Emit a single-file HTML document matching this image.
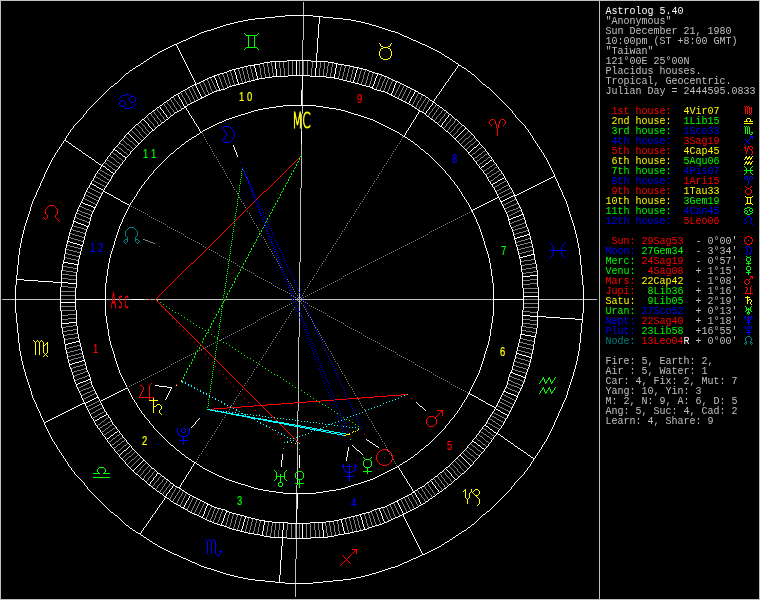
<!DOCTYPE html>
<html><head><meta charset="utf-8"><title>Astrolog 5.40</title>
<style>
html,body{margin:0;padding:0;background:#000}
#root{will-change:transform;position:relative;width:760px;height:600px;background:#000;overflow:hidden}
#root svg{position:absolute;left:0;top:0}
.ln{position:absolute;left:605.5px;height:10px;line-height:10px;font-family:"Liberation Mono",monospace;font-size:10px;white-space:pre;color:#c0c0c0}
.w{color:#fff}.g{color:#c0c0c0}.r{color:#f00}.y{color:#ff0}.n{color:#0f0}.b{color:#00f}.t{color:#008080}
.hn{font-family:"Liberation Sans",sans-serif;font-size:12.5px;text-anchor:middle}.lab{font-family:"DejaVu Sans Light","DejaVu Sans","Liberation Sans",sans-serif;text-anchor:middle}
</style></head><body>
<div id="root">
<svg width="760" height="600" viewBox="0 0 760 600">
<rect x="0" y="0" width="760" height="600" fill="#000"/>
<g fill="none" stroke-width="1" shape-rendering="crispEdges" transform="translate(0,0.5)">

<path stroke="#c0c0c0" d="M303 2h1M303 3h1M303 4h1M303 5h1M303 6h1M303 7h1M303 8h1M303 9h1M303 10h1M303 11h1M303 12h1M303 13h1M303 14h1M303 15h1M303 16h1M303 17h1M303 18h1M303 19h1M303 20h1M303 21h1M303 22h1M303 23h1M303 24h1M303 25h1M303 26h1M303 27h1M303 28h1M303 29h1M303 30h1M303 31h1M303 32h1M303 33h1M303 34h1M303 35h1M303 36h1M303 37h1M303 38h1M303 39h1M302 40h1M302 41h1M302 42h1M302 43h1M302 44h1M302 45h1M302 46h1M302 47h1M302 48h1M302 49h1M302 50h1M302 51h1M302 52h1M302 53h1M302 54h1M302 55h1M302 56h1M302 57h1M302 58h1M302 59h1M302 60h1M302 61h1M302 62h1M302 63h1M302 64h1M302 65h1M302 66h1M302 67h1M302 68h1M302 69h1M302 70h1M302 71h1M302 72h1M302 73h1M302 74h1M302 75h1M302 76h1M302 77h1M302 78h1M302 79h1M302 80h1M302 81h1M302 82h1M302 83h1M302 84h1M302 85h1M302 86h1M302 87h1M302 88h1M302 89h1M302 90h1M302 91h1M302 92h1M302 93h1M302 94h1M302 95h1M302 96h1M302 97h1M302 98h1M302 99h1M302 100h1M302 101h1M302 102h1M302 103h1M302 104h1M302 105h1M302 106h1M302 107h1M302 108h1M302 109h1M302 110h1M302 111h1M302 112h1M302 113h1M301 114h1M301 115h1M301 116h1M301 117h1M301 118h1M301 119h1M301 120h1M301 121h1M301 122h1M301 123h1M301 124h1M301 125h1M301 126h1M301 127h1M301 128h1M301 129h1M301 130h1M301 131h1M301 132h1M301 133h1M301 134h1M301 135h1M301 136h1M301 137h1M301 138h1M301 139h1M301 140h1M301 141h1M301 142h1M301 143h1M301 144h1M301 145h1M301 146h1M301 147h1M301 148h1M301 149h1M301 150h1M301 151h1M301 152h1M301 153h1M301 154h1M301 155h1M301 156h1M301 157h1M301 158h1M301 159h1M301 160h1M301 161h1M301 162h1M301 163h1M301 164h1M301 165h1M301 166h1M301 167h1M301 168h1M301 169h1M301 170h1M301 171h1M301 172h1M301 173h1M301 174h1M301 175h1M301 176h1M301 177h1M301 178h1M301 179h1M301 180h1M301 181h1M301 182h1M301 183h1M301 184h1M301 185h1M301 186h1M301 187h1M300 188h1M300 189h1M300 190h1M300 191h1M300 192h1M300 193h1M300 194h1M300 195h1M300 196h1M300 197h1M300 198h1M300 199h1M300 200h1M300 201h1M300 202h1M300 203h1M300 204h1M300 205h1M300 206h1M300 207h1M300 208h1M300 209h1M300 210h1M300 211h1M300 212h1M300 213h1M300 214h1M300 215h1M300 216h1M300 217h1M300 218h1M300 219h1M300 220h1M300 221h1M300 222h1M300 223h1M300 224h1M300 225h1M300 226h1M300 227h1M300 228h1M300 229h1M300 230h1M300 231h1M300 232h1M300 233h1M300 234h1M300 235h1M300 236h1M300 237h1M300 238h1M300 239h1M300 240h1M300 241h1M300 242h1M300 243h1M300 244h1M300 245h1M300 246h1M300 247h1M300 248h1M300 249h1M300 250h1M300 251h1M300 252h1M300 253h1M300 254h1M300 255h1M300 256h1M300 257h1M300 258h1M300 259h1M300 260h1M300 261h1M299 262h1M299 263h1M299 264h1M299 265h1M299 266h1M299 267h1M299 268h1M299 269h1M299 270h1M299 271h1M299 272h1M299 273h1M299 274h1M299 275h1M299 276h1M299 277h1M299 278h1M299 279h1M299 280h1M299 281h1M299 282h1M299 283h1M299 284h1M299 285h1M299 286h1M299 287h1M299 288h1M299 289h1M299 290h1M299 291h1M299 292h1M299 293h1M299 294h1M299 295h1M299 296h1M299 297h1M299 298h1M2 299h595M299 300h1M299 301h1M299 302h1M299 303h1M299 304h1M299 305h1M299 306h1M299 307h1M299 308h1M299 309h1M299 310h1M299 311h1M299 312h1M299 313h1M299 314h1M299 315h1M299 316h1M299 317h1M299 318h1M299 319h1M299 320h1M299 321h1M299 322h1M299 323h1M299 324h1M299 325h1M299 326h1M299 327h1M299 328h1M299 329h1M299 330h1M299 331h1M299 332h1M299 333h1M299 334h1M299 335h1M299 336h1M298 337h1M298 338h1M298 339h1M298 340h1M298 341h1M298 342h1M298 343h1M298 344h1M298 345h1M298 346h1M298 347h1M298 348h1M298 349h1M298 350h1M298 351h1M298 352h1M298 353h1M298 354h1M298 355h1M298 356h1M298 357h1M298 358h1M298 359h1M298 360h1M298 361h1M298 362h1M298 363h1M298 364h1M298 365h1M298 366h1M298 367h1M298 368h1M298 369h1M298 370h1M298 371h1M298 372h1M298 373h1M298 374h1M298 375h1M298 376h1M298 377h1M298 378h1M298 379h1M298 380h1M298 381h1M298 382h1M298 383h1M298 384h1M298 385h1M298 386h1M298 387h1M298 388h1M298 389h1M298 390h1M298 391h1M298 392h1M298 393h1M298 394h1M298 395h1M298 396h1M298 397h1M298 398h1M298 399h1M298 400h1M298 401h1M298 402h1M298 403h1M298 404h1M298 405h1M298 406h1M298 407h1M298 408h1M298 409h1M298 410h1M297 411h1M297 412h1M297 413h1M297 414h1M297 415h1M297 416h1M297 417h1M297 418h1M297 419h1M297 420h1M297 421h1M297 422h1M297 423h1M297 424h1M297 425h1M297 426h1M297 427h1M297 428h1M297 429h1M297 430h1M297 431h1M297 432h1M297 433h1M297 434h1M297 435h1M297 436h1M297 437h1M297 438h1M297 439h1M297 440h1M297 441h1M297 442h1M297 443h1M297 444h1M297 445h1M297 446h1M297 447h1M297 448h1M297 449h1M297 450h1M297 451h1M297 452h1M297 453h1M297 454h1M297 455h1M297 456h1M297 457h1M297 458h1M297 459h1M297 460h1M297 461h1M297 462h1M297 463h1M297 464h1M297 465h1M297 466h1M297 467h1M297 468h1M297 469h1M297 470h1M297 471h1M297 472h1M297 473h1M297 474h1M297 475h1M297 476h1M297 477h1M297 478h1M297 479h1M297 480h1M297 481h1M297 482h1M297 483h1M297 484h1M296 485h1M296 486h1M296 487h1M296 488h1M296 489h1M296 490h1M296 491h1M296 492h1M296 493h1M296 494h1M296 495h1M296 496h1M296 497h1M296 498h1M296 499h1M296 500h1M296 501h1M296 502h1M296 503h1M296 504h1M296 505h1M296 506h1M296 507h1M296 508h1M296 509h1M296 510h1M296 511h1M296 512h1M296 513h1M296 514h1M296 515h1M296 516h1M296 517h1M296 518h1M296 519h1M296 520h1M296 521h1M296 522h1M296 523h1M296 524h1M296 525h1M296 526h1M296 527h1M296 528h1M296 529h1M296 530h1M296 531h1M296 532h1M296 533h1M296 534h1M296 535h1M296 536h1M296 537h1M296 538h1M296 539h1M296 540h1M296 541h1M296 542h1M296 543h1M296 544h1M296 545h1M296 546h1M296 547h1M296 548h1M296 549h1M296 550h1M296 551h1M296 552h1M296 553h1M296 554h1M296 555h1M296 556h1M296 557h1M296 558h1M295 559h1M295 560h1M295 561h1M295 562h1M295 563h1M295 564h1M295 565h1M295 566h1M295 567h1M295 568h1M295 569h1M295 570h1M295 571h1M295 572h1M295 573h1M295 574h1M295 575h1M295 576h1M295 577h1M295 578h1M295 579h1M295 580h1M295 581h1M295 582h1M295 583h1M295 584h1M295 585h1M295 586h1M295 587h1M295 588h1M295 589h1M295 590h1M295 591h1M295 592h1M295 593h1M295 594h1M295 595h1M295 596h1"/>
<path stroke="#fff" d="M513 195h2M511 196h2M509 197h2M507 198h2M505 199h2M503 200h2M501 201h2"/>
<path stroke="#808080" d="M506 180h1M504 181h2M502 182h2M500 183h2M499 184h1M508 184h1M497 185h2M506 185h2M495 186h2M504 186h2M494 187h1M502 187h2M501 188h1M509 188h2M499 189h2M507 189h2M497 190h2M505 190h2M496 191h1M503 191h2M512 191h1M501 192h2M510 192h2M499 193h2M508 193h2M498 194h1M506 194h2M504 195h2M502 196h2M500 197h2M499 198h1"/>
<path stroke="#fff" d="M504 177h1M502 178h2M500 179h2M498 180h2M497 181h1M495 182h2M493 183h2M492 184h1"/>
<path stroke="#808080" d="M495 163h1M493 164h2M492 165h1M490 166h2M497 166h1M489 167h1M495 167h2M487 168h2M494 168h1M486 169h1M493 169h1M484 170h2M491 170h2M499 170h1M483 171h1M490 171h1M497 171h2M489 172h1M496 172h1M487 173h2M494 173h2M501 173h1M486 174h1M492 174h2M499 174h2M491 175h1M498 175h1M489 176h2M497 176h1M488 177h1M495 177h2M494 178h1M493 179h1M491 180h2M490 181h1"/>
<path stroke="#fff" d="M492 159h1M490 160h2M489 161h1M488 162h1M486 163h2M485 164h1M484 165h1M482 166h2M481 167h1"/>
<path stroke="#808080" d="M482 146h1M481 147h1M479 148h2M478 149h1M477 150h1M485 150h1M476 151h1M483 151h2M475 152h1M482 152h1M473 153h2M481 153h1M487 153h1M472 154h1M479 154h2M485 154h2M471 155h1M478 155h1M484 155h1M477 156h1M483 156h1M490 156h1M475 157h2M481 157h2M488 157h2M474 158h1M480 158h1M487 158h1M479 159h1M486 159h1M477 160h2M484 160h2M476 161h1M483 161h1M482 162h1M480 163h2M479 164h1"/>
<path stroke="#fff" d="M479 143h1M478 144h1M477 145h1M476 146h1M474 147h2M473 148h1M472 149h1M471 150h1M470 151h1M469 152h1"/>
<path stroke="#808080" d="M468 131h1M467 132h1M466 133h1M465 134h1M471 134h1M464 135h1M470 135h1M463 136h1M469 136h1M462 137h1M468 137h1M474 137h1M461 138h1M466 138h2M473 138h1M460 139h1M465 139h1M472 139h1M459 140h1M464 140h1M471 140h1M476 140h1M458 141h1M463 141h1M469 141h2M475 141h1M462 142h1M468 142h1M474 142h1M461 143h1M467 143h1M473 143h1M466 144h1M471 144h2M465 145h1M470 145h1M464 146h1M469 146h1M468 147h1M467 148h1M466 149h1"/>
<path stroke="#fff" d="M465 128h1M464 129h1M463 130h1M462 131h1M461 132h1M460 133h1M459 134h1M458 135h1M457 136h1M456 137h1M455 138h1"/>
<path stroke="#808080" d="M452 117h1M451 118h1M450 119h1M456 119h1M450 120h1M455 120h1M449 121h1M454 121h1M448 122h1M454 122h1M459 122h1M447 123h1M453 123h1M458 123h1M446 124h1M452 124h1M457 124h1M446 125h1M451 125h1M456 125h1M462 125h1M445 126h1M450 126h1M455 126h1M461 126h1M444 127h1M449 127h1M454 127h1M460 127h1M449 128h1M454 128h1M459 128h1M448 129h1M453 129h1M458 129h1M447 130h1M452 130h1M457 130h1M451 131h1M457 131h1M450 132h1M456 132h1M455 133h1M454 134h1M453 135h1"/>
<path stroke="#fff" d="M449 114h1M448 115h1M448 116h1M447 117h1M446 118h1M445 119h1M445 120h1M444 121h1M443 122h1M442 123h1M442 124h1M441 125h1"/>
<path stroke="#808080" d="M436 104h1M435 105h1M435 106h1M439 106h1M434 107h1M438 107h1M433 108h1M438 108h1M432 109h1M437 109h1M443 109h1M432 110h1M436 110h1M442 110h1M431 111h1M436 111h1M441 111h1M430 112h1M435 112h1M441 112h1M446 112h1M429 113h1M434 113h1M440 113h1M445 113h1M429 114h1M434 114h1M439 114h1M444 114h1M428 115h1M433 115h1M438 115h1M444 115h1M432 116h1M437 116h1M443 116h1M432 117h1M436 117h1M442 117h1M431 118h1M436 118h1M441 118h1M435 119h1M440 119h1M434 120h1M440 120h1M439 121h1M438 122h1"/>
<path stroke="#fff" d="M433 102h1M432 103h1M432 104h1M431 105h1M430 106h1M429 107h1M429 108h1M428 109h1M427 110h1M426 111h1M426 112h1M425 113h1"/>
<path stroke="#808080" d="M418 93h1M417 94h1M417 95h1M422 95h1M416 96h1M421 96h1M416 97h1M421 97h1M426 97h1M415 98h1M420 98h1M425 98h1M415 99h1M420 99h1M425 99h1M429 99h1M414 100h1M419 100h1M424 100h1M428 100h1M414 101h1M418 101h1M423 101h1M428 101h1M413 102h1M418 102h1M423 102h1M427 102h1M413 103h1M417 103h1M422 103h1M427 103h1M412 104h1M417 104h1M421 104h1M426 104h1M412 105h1M416 105h1M421 105h1M425 105h1M416 106h1M420 106h1M425 106h1M415 107h1M419 107h1M424 107h1M419 108h1M424 108h1M418 109h1M423 109h1M423 110h1M422 111h1"/>
<path stroke="#fff" d="M415 91h1M414 92h1M414 93h1M413 94h1M413 95h1M412 96h1M411 97h1M411 98h1M410 99h1M410 100h1M409 101h1M409 102h1M408 103h1"/>
<path stroke="#808080" d="M400 83h1M400 84h1M399 85h1M404 85h1M399 86h1M403 86h1M398 87h1M403 87h1M407 87h1M398 88h1M402 88h1M406 88h1M397 89h1M402 89h1M406 89h1M411 89h1M397 90h1M401 90h1M405 90h1M410 90h1M396 91h1M401 91h1M405 91h1M410 91h1M396 92h1M400 92h1M404 92h1M409 92h1M395 93h1M400 93h1M404 93h1M409 93h1M395 94h1M399 94h1M403 94h1M408 94h1M394 95h1M399 95h1M403 95h1M408 95h1M394 96h1M398 96h1M402 96h1M407 96h1M398 97h1M402 97h1M407 97h1M401 98h1M406 98h1M401 99h1M406 99h1M405 100h1M405 101h1"/>
<path stroke="#fff" d="M396 81h1M396 82h1M395 83h1M395 84h1M394 85h1M394 86h1M394 87h1M393 88h1M393 89h1M393 90h1M392 91h1M392 92h1M391 93h1M391 94h1"/>
<path stroke="#808080" d="M381 75h1M381 76h1M380 77h1M385 77h1M380 78h1M385 78h1M388 78h1M379 79h1M384 79h1M388 79h1M379 80h1M384 80h1M387 80h1M392 80h1M379 81h1M383 81h1M387 81h1M392 81h1M378 82h1M383 82h1M386 82h1M391 82h1M378 83h1M382 83h1M386 83h1M391 83h1M378 84h1M382 84h1M386 84h1M390 84h1M377 85h1M382 85h1M385 85h1M390 85h1M377 86h1M381 86h1M385 86h1M389 86h1M376 87h1M381 87h1M385 87h1M389 87h1M376 88h1M380 88h1M384 88h1M389 88h1M380 89h1M384 89h1M388 89h1M383 90h1M388 90h1M383 91h1M387 91h1M387 92h1"/>
<path stroke="#fff" d="M377 74h1M377 75h1M376 76h1M376 77h1M375 78h1M375 79h1M375 80h1M374 81h1M374 82h1M374 83h1M373 84h1M373 85h1M372 86h1M372 87h1"/>
<path stroke="#808080" d="M361 69h1M361 70h1M365 70h1M360 71h1M365 71h1M369 71h1M360 72h1M364 72h1M369 72h1M373 72h1M360 73h1M364 73h1M368 73h1M373 73h1M359 74h1M364 74h1M368 74h1M372 74h1M359 75h1M363 75h1M368 75h1M372 75h1M359 76h1M363 76h1M367 76h1M372 76h1M359 77h1M363 77h1M367 77h1M371 77h1M358 78h1M363 78h1M367 78h1M371 78h1M358 79h1M362 79h1M367 79h1M371 79h1M358 80h1M362 80h1M366 80h1M371 80h1M357 81h1M362 81h1M366 81h1M370 81h1M357 82h1M361 82h1M366 82h1M370 82h1M361 83h1M365 83h1M370 83h1M365 84h1M369 84h1M369 85h1"/>
<path stroke="#fff" d="M357 68h1M357 69h1M356 70h1M356 71h1M356 72h1M355 73h1M355 74h1M355 75h1M355 76h1M354 77h1M354 78h1M354 79h1M353 80h1M353 81h1"/>
<path stroke="#808080" d="M341 64h1M341 65h1M345 65h1M341 66h1M345 66h1M349 66h1M340 67h1M345 67h1M349 67h1M353 67h1M340 68h1M344 68h1M349 68h1M353 68h1M340 69h1M344 69h1M348 69h1M353 69h1M340 70h1M344 70h1M348 70h1M352 70h1M339 71h1M344 71h1M348 71h1M352 71h1M339 72h1M343 72h1M348 72h1M352 72h1M339 73h1M343 73h1M347 73h1M352 73h1M339 74h1M343 74h1M347 74h1M351 74h1M339 75h1M343 75h1M347 75h1M351 75h1M338 76h1M342 76h1M347 76h1M351 76h1M338 77h1M342 77h1M346 77h1M351 77h1M338 78h1M342 78h1M346 78h1M350 78h1M346 79h1M350 79h1M350 80h1"/>
<path stroke="#fff" d="M336 64h1M336 65h1M336 66h1M336 67h1M335 68h1M335 69h1M335 70h1M335 71h1M335 72h1M335 73h1M334 74h1M334 75h1M334 76h1M334 77h1"/>
<path stroke="#808080" d="M320 61h1M320 62h1M324 62h1M328 62h1M320 63h1M324 63h1M328 63h1M332 63h1M320 64h1M324 64h1M328 64h1M332 64h1M320 65h1M324 65h1M328 65h1M332 65h1M320 66h1M324 66h1M327 66h1M332 66h1M320 67h1M324 67h1M327 67h1M331 67h1M319 68h1M324 68h1M327 68h1M331 68h1M319 69h1M323 69h1M327 69h1M331 69h1M319 70h1M323 70h1M327 70h1M331 70h1M319 71h1M323 71h1M327 71h1M331 71h1M319 72h1M323 72h1M327 72h1M331 72h1M319 73h1M323 73h1M326 73h1M330 73h1M319 74h1M323 74h1M326 74h1M330 74h1M319 75h1M323 75h1M326 75h1M330 75h1M326 76h1M330 76h1"/>
<path stroke="#fff" d="M316 61h1M316 62h1M316 63h1M316 64h1M316 65h1M316 66h1M316 67h1M315 68h1M315 69h1M315 70h1M315 71h1M315 72h1M315 73h1M315 74h1M315 75h1"/>
<path stroke="#808080" d="M299 61h1M303 61h1M307 61h1M312 61h1M299 62h1M303 62h1M307 62h1M312 62h1M299 63h1M303 63h1M307 63h1M312 63h1M299 64h1M303 64h1M307 64h1M312 64h1M299 65h1M303 65h1M307 65h1M312 65h1M299 66h1M303 66h1M307 66h1M312 66h1M299 67h1M303 67h1M307 67h1M312 67h1M299 68h1M303 68h1M307 68h1M311 68h1M299 69h1M303 69h1M307 69h1M311 69h1M299 70h1M303 70h1M307 70h1M311 70h1M299 71h1M303 71h1M307 71h1M311 71h1M299 72h1M303 72h1M307 72h1M311 72h1M299 73h1M303 73h1M307 73h1M311 73h1M299 74h1M303 74h1M307 74h1M311 74h1M311 75h1"/>
<path stroke="#fff" d="M296 61h1M296 62h1M296 63h1M296 64h1M296 65h1M296 66h1M296 67h1M296 68h1M296 69h1M296 70h1M296 71h1M296 72h1M296 73h1M296 74h1"/>
<path stroke="#808080" d="M279 61h1M283 61h1M288 61h1M292 61h1M279 62h1M283 62h1M288 62h1M292 62h1M279 63h1M283 63h1M288 63h1M292 63h1M279 64h1M283 64h1M288 64h1M292 64h1M279 65h1M283 65h1M288 65h1M292 65h1M279 66h1M283 66h1M288 66h1M292 66h1M279 67h1M283 67h1M288 67h1M292 67h1M280 68h1M284 68h1M288 68h1M292 68h1M280 69h1M284 69h1M288 69h1M292 69h1M280 70h1M284 70h1M288 70h1M292 70h1M280 71h1M284 71h1M288 71h1M292 71h1M280 72h1M284 72h1M288 72h1M292 72h1M280 73h1M284 73h1M288 73h1M292 73h1M280 74h1M284 74h1M288 74h1M292 74h1M280 75h1M284 75h1"/>
<path stroke="#fff" d="M275 62h1M275 63h1M275 64h1M275 65h1M275 66h1M275 67h1M275 68h1M276 69h1M276 70h1M276 71h1M276 72h1M276 73h1M276 74h1M276 75h1"/>
<path stroke="#808080" d="M271 62h1M263 63h1M267 63h1M271 63h1M259 64h1M263 64h1M267 64h1M271 64h1M259 65h1M263 65h1M267 65h1M271 65h1M259 66h1M263 66h1M267 66h1M272 66h1M259 67h1M264 67h1M268 67h1M272 67h1M260 68h1M264 68h1M268 68h1M272 68h1M260 69h1M264 69h1M268 69h1M272 69h1M260 70h1M264 70h1M268 70h1M272 70h1M260 71h1M264 71h1M268 71h1M272 71h1M260 72h1M264 72h1M268 72h1M272 72h1M260 73h1M264 73h1M269 73h1M273 73h1M260 74h1M265 74h1M269 74h1M273 74h1M261 75h1M265 75h1M269 75h1M273 75h1M261 76h1M265 76h1M269 76h1M273 76h1M261 77h1M265 77h1M261 78h1"/>
<path stroke="#fff" d="M254 65h1M254 66h1M254 67h1M255 68h1M255 69h1M255 70h1M255 71h1M256 72h1M256 73h1M256 74h1M256 75h1M257 76h1M257 77h1M257 78h1"/>
<path stroke="#808080" d="M250 66h1M246 67h1M250 67h1M242 68h1M246 68h1M250 68h1M238 69h1M242 69h1M246 69h1M251 69h1M238 70h1M242 70h1M247 70h1M251 70h1M239 71h1M243 71h1M247 71h1M251 71h1M239 72h1M243 72h1M247 72h1M251 72h1M239 73h1M243 73h1M247 73h1M252 73h1M240 74h1M243 74h1M248 74h1M252 74h1M240 75h1M244 75h1M248 75h1M252 75h1M240 76h1M244 76h1M248 76h1M252 76h1M240 77h1M244 77h1M248 77h1M253 77h1M241 78h1M244 78h1M249 78h1M253 78h1M241 79h1M245 79h1M249 79h1M253 79h1M241 80h1M245 80h1M249 80h1M242 81h1M245 81h1M242 82h1"/>
<path stroke="#fff" d="M234 70h1M234 71h1M235 72h1M235 73h1M235 74h1M236 75h1M236 76h1M236 77h1M236 78h1M237 79h1M237 80h1M237 81h1M238 82h1M238 83h1"/>
<path stroke="#808080" d="M230 71h1M226 72h1M230 72h1M222 73h1M226 73h1M231 73h1M222 74h1M227 74h1M231 74h1M218 75h1M223 75h1M227 75h1M231 75h1M218 76h1M223 76h1M227 76h1M232 76h1M219 77h1M224 77h1M228 77h1M232 77h1M219 78h1M224 78h1M228 78h1M232 78h1M220 79h1M224 79h1M228 79h1M232 79h1M220 80h1M225 80h1M228 80h1M233 80h1M220 81h1M225 81h1M229 81h1M233 81h1M221 82h1M225 82h1M229 82h1M233 82h1M221 83h1M226 83h1M229 83h1M234 83h1M221 84h1M226 84h1M230 84h1M234 84h1M222 85h1M227 85h1M230 85h1M222 86h1M227 86h1M223 87h1M223 88h1"/>
<path stroke="#fff" d="M214 76h1M214 77h1M215 78h1M215 79h1M216 80h1M216 81h1M216 82h1M217 83h1M217 84h1M217 85h1M218 86h1M218 87h1M219 88h1M219 89h1"/>
<path stroke="#808080" d="M210 78h1M207 79h1M211 79h1M207 80h1M211 80h1M203 81h1M208 81h1M212 81h1M203 82h1M208 82h1M212 82h1M199 83h1M204 83h1M209 83h1M213 83h1M200 84h1M204 84h1M209 84h1M213 84h1M200 85h1M205 85h1M209 85h1M214 85h1M201 86h1M205 86h1M210 86h1M214 86h1M201 87h1M206 87h1M210 87h1M215 87h1M202 88h1M206 88h1M210 88h1M215 88h1M202 89h1M206 89h1M211 89h1M216 89h1M203 90h1M207 90h1M211 90h1M216 90h1M203 91h1M207 91h1M212 91h1M204 92h1M208 92h1M212 92h1M204 93h1M208 93h1M205 94h1M205 95h1"/>
<path stroke="#fff" d="M195 84h1M195 85h1M196 86h1M196 87h1M197 88h1M197 89h1M198 90h1M198 91h1M199 92h1M199 93h1M200 94h1M200 95h1M201 96h1M201 97h1"/>
<path stroke="#808080" d="M191 86h1M192 87h1M188 88h1M192 88h1M189 89h1M193 89h1M184 90h1M189 90h1M193 90h1M185 91h1M190 91h1M194 91h1M180 92h1M185 92h1M190 92h1M194 92h1M181 93h1M186 93h1M191 93h1M195 93h1M181 94h1M186 94h1M191 94h1M195 94h1M182 95h1M187 95h1M192 95h1M196 95h1M182 96h1M188 96h1M192 96h1M196 96h1M183 97h1M188 97h1M193 97h1M197 97h1M184 98h1M189 98h1M193 98h1M197 98h1M184 99h1M189 99h1M194 99h1M198 99h1M185 100h1M190 100h1M194 100h1M185 101h1M190 101h1M186 102h1M191 102h1M186 103h1M187 104h1"/>
<path stroke="#fff" d="M177 94h1M178 95h1M178 96h1M179 97h1M179 98h1M180 99h1M181 100h1M181 101h1M182 102h1M182 103h1M183 104h1M183 105h1M184 106h1"/>
<path stroke="#808080" d="M173 97h1M174 98h1M170 99h1M174 99h1M171 100h1M175 100h1M166 101h1M171 101h1M176 101h1M167 102h1M172 102h1M177 102h1M163 103h1M167 103h1M173 103h1M177 103h1M164 104h1M168 104h1M173 104h1M178 104h1M164 105h1M169 105h1M174 105h1M179 105h1M165 106h1M170 106h1M174 106h1M180 106h1M166 107h1M170 107h1M175 107h1M180 107h1M166 108h1M171 108h1M176 108h1M181 108h1M167 109h1M172 109h1M176 109h1M168 110h1M173 110h1M177 110h1M168 111h1M173 111h1M169 112h1M174 112h1M170 113h1M170 114h1M171 115h1"/>
<path stroke="#fff" d="M159 106h1M160 107h1M160 108h1M161 109h1M162 110h1M163 111h1M163 112h1M164 113h1M165 114h1M166 115h1M166 116h1M167 117h1"/>
<path stroke="#808080" d="M156 108h1M157 109h1M157 110h1M153 111h1M158 111h1M154 112h1M159 112h1M150 113h1M154 113h1M160 113h1M151 114h1M155 114h1M160 114h1M151 115h1M156 115h1M161 115h1M146 116h1M152 116h1M157 116h1M162 116h1M147 117h1M153 117h1M157 117h1M163 117h1M148 118h1M154 118h1M158 118h1M163 118h1M148 119h1M154 119h1M159 119h1M164 119h1M149 120h1M155 120h1M160 120h1M150 121h1M156 121h1M160 121h1M151 122h1M157 122h1M161 122h1M152 123h1M157 123h1M153 124h1M158 124h1M153 125h1M154 126h1M155 127h1"/>
<path stroke="#fff" d="M143 119h1M144 120h1M145 121h1M146 122h1M147 123h1M148 124h1M148 125h1M149 126h1M150 127h1M151 128h1M152 129h1"/>
<path stroke="#808080" d="M140 122h1M141 123h1M137 124h1M142 124h1M138 125h1M143 125h1M139 126h1M144 126h1M134 127h1M140 127h1M145 127h1M135 128h1M141 128h1M145 128h1M136 129h1M142 129h1M146 129h1M131 130h1M137 130h1M142 130h1M147 130h1M132 131h1M138 131h1M143 131h1M148 131h1M133 132h1M139 132h1M144 132h1M149 132h1M134 133h1M139 133h1M145 133h1M135 134h1M140 134h1M146 134h1M136 135h1M141 135h1M137 136h1M142 136h1M138 137h1M143 137h1M139 138h1M140 139h1M141 140h1"/>
<path stroke="#fff" d="M128 133h1M129 134h1M130 135h1M131 136h1M132 137h1M133 138h1M134 139h1M135 140h1M136 141h1M137 142h1M138 143h1"/>
<path stroke="#808080" d="M125 136h1M126 137h1M127 138h1M122 139h1M128 139h1M123 140h1M129 140h1M124 141h1M130 141h2M119 142h1M125 142h1M132 142h1M120 143h1M126 143h1M133 143h1M121 144h2M127 144h2M134 144h1M123 145h1M129 145h1M135 145h1M117 146h1M124 146h1M130 146h1M118 147h1M125 147h1M131 147h1M119 148h2M126 148h1M132 148h1M121 149h1M127 149h2M122 150h1M129 150h1M123 151h1M130 151h1M124 152h2M126 153h1M127 154h1"/>
<path stroke="#fff" d="M114 149h1M115 150h2M117 151h1M118 152h1M119 153h2M121 154h1M122 155h1M123 156h2M125 157h1"/>
<path stroke="#808080" d="M112 152h1M113 153h1M114 154h2M109 155h1M116 155h1M110 156h1M117 156h1M111 157h2M118 157h1M113 158h1M119 158h2M106 159h1M114 159h1M121 159h1M107 160h2M115 160h1M122 160h1M109 161h1M116 161h1M104 162h1M110 162h2M117 162h2M105 163h2M112 163h1M119 163h1M107 164h1M113 164h2M120 164h1M108 165h1M115 165h1M109 166h2M116 166h2M111 167h1M118 167h1M112 168h1M113 169h2M115 170h1"/>
<path stroke="#fff" d="M102 165h1M103 166h2M105 167h1M106 168h1M107 169h2M109 170h1M110 171h1M111 172h2M113 173h1"/>
<path stroke="#808080" d="M99 169h1M100 170h2M102 171h2M97 172h1M104 172h1M98 173h2M105 173h2M100 174h1M107 174h2M101 175h2M109 175h2M95 176h1M103 176h1M111 176h1M96 177h2M104 177h2M98 178h2M106 178h1M100 179h1M107 179h2M93 180h1M101 180h2M109 180h1M94 181h2M103 181h2M96 182h2M105 182h2M98 183h2M107 183h1M100 184h2M102 185h2M104 186h2"/>
<path stroke="#fff" d="M91 183h1M92 184h2M94 185h2M96 186h1M97 187h2M99 188h2M101 189h2M103 190h1"/>
<path stroke="#808080" d="M89 187h1M90 188h2M92 189h2M94 190h2M87 191h1M96 191h2M88 192h2M98 192h2M90 193h2M100 193h2M85 194h1M92 194h2M86 195h2M94 195h2M88 196h2M96 196h2M90 197h2M98 197h2M83 198h2M92 198h2M85 199h2M94 199h2M87 200h2M96 200h2M89 201h2M91 202h2M93 203h2M95 204h2"/>
<path stroke="#fff" d="M81 202h2M83 203h2M85 204h3M88 205h3M91 206h2M93 207h2"/>
<path stroke="#808080" d="M80 206h2M82 207h2M84 208h2M86 209h3M78 210h2M89 210h2M80 211h2M91 211h2M82 212h3M77 213h2M85 213h3M79 214h2M88 214h2M81 215h2M90 215h2M83 216h3M75 217h2M86 217h2M77 218h2M88 218h2M79 219h3M82 220h3M85 221h2M87 222h2"/>
<path stroke="#fff" d="M74 221h2M76 222h2M78 223h3M81 224h3M84 225h2M86 226h2"/>
<path stroke="#808080" d="M72 225h2M74 226h3M77 227h4M81 228h3M71 229h2M84 229h2M73 230h3M76 231h4M80 232h3M70 233h2M83 233h2M72 234h3M75 235h4M79 236h3M69 237h2M82 237h2M71 238h3M74 239h4M78 240h3M81 241h2"/>
<path stroke="#fff" d="M68 241h2M70 242h3M73 243h4M77 244h3M80 245h2"/>
<path stroke="#808080" d="M67 245h3M70 246h4M74 247h4M78 248h3M66 249h3M69 250h4M73 251h4M77 252h3M65 253h3M68 254h4M72 255h4M76 256h3M64 257h3M67 258h4M71 259h5M76 260h3"/>
<path stroke="#fff" d="M64 262h4M68 263h6M74 264h4"/>
<path stroke="#808080" d="M63 266h4M67 267h6M73 268h4M62 270h4M66 271h7M73 272h4M62 274h7M69 275h7M61 278h7M68 279h8"/>
<path stroke="#fff" d="M61 282h7M68 283h8"/>
<path stroke="#808080" d="M61 286h7M68 287h8M61 291h14M61 295h14M61 299h14"/>
<path stroke="#fff" d="M61 302h14"/>
<path stroke="#808080" d="M61 306h14M61 310h14M68 314h8M61 315h7M68 318h8M61 319h7"/>
<path stroke="#fff" d="M69 322h7M62 323h7"/>
<path stroke="#808080" d="M73 325h4M66 326h7M62 327h4M73 329h4M67 330h6M63 331h4M74 333h4M67 334h7M63 335h4M75 337h4M68 338h7M64 339h4"/>
<path stroke="#fff" d="M76 341h3M72 342h4M68 343h4M65 344h3"/>
<path stroke="#808080" d="M77 345h3M73 346h4M69 347h4M66 348h3M78 349h3M74 350h4M70 351h4M67 352h3M79 353h3M75 354h4M71 355h4M68 356h3M81 356h2M78 357h3M74 358h4M71 359h3M69 360h2"/>
<path stroke="#fff" d="M82 360h2M79 361h3M75 362h4M72 363h3M70 364h2"/>
<path stroke="#808080" d="M83 364h2M80 365h3M76 366h4M73 367h3M71 368h2M84 368h2M81 369h3M77 370h4M74 371h3M85 371h2M72 372h2M83 372h2M80 373h3M77 374h3M75 375h2M87 375h2M73 376h2M85 376h2M82 377h3M79 378h3M77 379h2M75 380h2"/>
<path stroke="#fff" d="M88 379h2M86 380h2M83 381h3M80 382h3M78 383h2M76 384h2"/>
<path stroke="#808080" d="M89 382h2M87 383h2M85 384h2M83 385h2M81 386h2M91 386h2M79 387h2M89 387h2M78 388h1M86 388h3M83 389h3M81 390h2M92 390h2M79 391h2M90 391h2M87 392h3M85 393h2M94 393h2M83 394h2M92 394h2M81 395h2M90 395h2M88 396h2M86 397h2M84 398h2M83 399h1"/>
<path stroke="#fff" d="M96 397h2M94 398h2M92 399h2M90 400h2M88 401h2M86 402h2M84 403h2"/>
<path stroke="#808080" d="M99 400h1M97 401h2M95 402h2M93 403h2M91 404h2M99 404h2M89 405h2M97 405h2M87 406h2M95 406h2M86 407h1M93 407h2M102 407h1M91 408h2M100 408h2M89 409h2M98 409h2M88 410h1M96 410h2M95 411h1M104 411h1M93 412h2M102 412h2M91 413h2M100 413h2M90 414h1M98 414h2M97 415h1M95 416h2M93 417h2M92 418h1"/>
<path stroke="#fff" d="M106 414h1M104 415h2M102 416h2M100 417h2M99 418h1M97 419h2M95 420h2M94 421h1"/>
<path stroke="#808080" d="M108 417h1M106 418h2M105 419h1M104 420h1M102 421h2M110 421h1M101 422h1M108 422h2M100 423h1M107 423h1M98 424h2M105 424h2M112 424h1M97 425h1M103 425h2M110 425h2M102 426h1M109 426h1M100 427h2M108 427h1M115 427h1M99 428h1M106 428h2M113 428h2M105 429h1M112 429h1M104 430h1M110 430h2M102 431h2M109 431h1M101 432h1M107 432h2M106 433h1M104 434h2M103 435h1"/>
<path stroke="#fff" d="M117 431h1M115 432h2M114 433h1M113 434h1M111 435h2M110 436h1M109 437h1M107 438h2M106 439h1"/>
<path stroke="#808080" d="M119 434h1M117 435h2M116 436h1M115 437h1M122 437h1M113 438h2M120 438h2M112 439h1M119 439h1M111 440h1M118 440h1M124 440h1M109 441h2M116 441h2M122 441h2M108 442h1M115 442h1M121 442h1M114 443h1M120 443h1M127 443h1M112 444h2M118 444h2M126 444h1M111 445h1M117 445h1M124 445h2M116 446h1M123 446h1M114 447h2M122 447h1M113 448h1M121 448h1M120 449h1M118 450h2M117 451h1M116 452h1"/>
<path stroke="#fff" d="M129 446h1M128 447h1M127 448h1M126 449h1M124 450h2M123 451h1M122 452h1M121 453h1M120 454h1M119 455h1"/>
<path stroke="#808080" d="M132 449h1M131 450h1M130 451h1M129 452h1M134 452h1M127 453h2M133 453h1M126 454h1M132 454h1M125 455h1M131 455h1M137 455h1M124 456h1M129 456h2M136 456h1M123 457h1M128 457h1M135 457h1M140 457h1M122 458h1M127 458h1M134 458h1M139 458h1M126 459h1M132 459h2M138 459h1M125 460h1M131 460h1M137 460h1M124 461h1M130 461h1M136 461h1M129 462h1M135 462h1M128 463h1M134 463h1M127 464h1M133 464h1M132 465h1M131 466h1M130 467h1"/>
<path stroke="#fff" d="M143 460h1M142 461h1M141 462h1M140 463h1M139 464h1M138 465h1M137 466h1M136 467h1M135 468h1M134 469h1M133 470h1"/>
<path stroke="#808080" d="M145 463h1M144 464h1M143 465h1M142 466h1M148 466h1M141 467h1M147 467h1M140 468h1M146 468h1M151 468h1M140 469h1M145 469h1M150 469h1M139 470h1M144 470h1M149 470h1M138 471h1M143 471h1M149 471h1M154 471h1M137 472h1M143 472h1M148 472h1M153 472h1M136 473h1M142 473h1M147 473h1M152 473h1M141 474h1M146 474h1M152 474h1M140 475h1M145 475h1M151 475h1M139 476h1M144 476h1M150 476h1M144 477h1M149 477h1M143 478h1M148 478h1M142 479h1M148 479h1M147 480h1M146 481h1"/>
<path stroke="#fff" d="M157 473h1M156 474h1M156 475h1M155 476h1M154 477h1M153 478h1M153 479h1M152 480h1M151 481h1M150 482h1M150 483h1M149 484h1"/>
<path stroke="#808080" d="M160 476h1M159 477h1M158 478h1M164 478h1M158 479h1M163 479h1M157 480h1M162 480h1M167 480h1M156 481h1M162 481h1M166 481h1M155 482h1M161 482h1M166 482h1M154 483h1M160 483h1M165 483h1M170 483h1M154 484h1M159 484h1M164 484h1M169 484h1M153 485h1M158 485h1M164 485h1M169 485h1M152 486h1M157 486h1M163 486h1M168 486h1M157 487h1M162 487h1M167 487h1M156 488h1M162 488h1M166 488h1M155 489h1M161 489h1M166 489h1M160 490h1M165 490h1M160 491h1M164 491h1M159 492h1M163 492h1M163 493h1M162 494h1"/>
<path stroke="#fff" d="M173 485h1M172 486h1M172 487h1M171 488h1M170 489h1M169 490h1M169 491h1M168 492h1M167 493h1M166 494h1M166 495h1M165 496h1"/>
<path stroke="#808080" d="M176 487h1M175 488h1M175 489h1M180 489h1M174 490h1M179 490h1M174 491h1M179 491h1M183 491h1M173 492h1M178 492h1M182 492h1M172 493h1M177 493h1M182 493h1M186 493h1M172 494h1M177 494h1M181 494h1M185 494h1M171 495h1M176 495h1M181 495h1M185 495h1M171 496h1M175 496h1M180 496h1M184 496h1M170 497h1M175 497h1M179 497h1M184 497h1M170 498h1M174 498h1M179 498h1M183 498h1M169 499h1M173 499h1M178 499h1M183 499h1M173 500h1M178 500h1M182 500h1M172 501h1M177 501h1M182 501h1M177 502h1M181 502h1M176 503h1M181 503h1M180 504h1M180 505h1"/>
<path stroke="#fff" d="M190 495h1M189 496h1M189 497h1M188 498h1M188 499h1M187 500h1M186 501h1M186 502h1M185 503h1M185 504h1M184 505h1M184 506h1M183 507h1"/>
<path stroke="#808080" d="M193 497h1M192 498h1M192 499h1M197 499h1M191 500h1M196 500h1M191 501h1M196 501h1M200 501h1M190 502h1M195 502h1M199 502h1M204 502h1M190 503h1M195 503h1M199 503h1M204 503h1M189 504h1M194 504h1M198 504h1M203 504h1M189 505h1M194 505h1M198 505h1M203 505h1M188 506h1M193 506h1M197 506h1M202 506h1M188 507h1M193 507h1M197 507h1M202 507h1M187 508h1M192 508h1M196 508h1M201 508h1M187 509h1M192 509h1M196 509h1M201 509h1M191 510h1M195 510h1M200 510h1M191 511h1M195 511h1M200 511h1M194 512h1M199 512h1M194 513h1M199 513h1M198 514h1M198 515h1"/>
<path stroke="#fff" d="M207 504h1M207 505h1M206 506h1M206 507h1M205 508h1M205 509h1M205 510h1M204 511h1M204 512h1M204 513h1M203 514h1M203 515h1M202 516h1M202 517h1"/>
<path stroke="#808080" d="M211 506h1M211 507h1M215 507h1M210 508h1M215 508h1M210 509h1M214 509h1M218 509h1M209 510h1M214 510h1M218 510h1M222 510h1M209 511h1M213 511h1M217 511h1M222 511h1M208 512h1M213 512h1M217 512h1M221 512h1M208 513h1M213 513h1M216 513h1M221 513h1M208 514h1M212 514h1M216 514h1M220 514h1M207 515h1M212 515h1M215 515h1M220 515h1M207 516h1M212 516h1M215 516h1M220 516h1M206 517h1M211 517h1M215 517h1M219 517h1M206 518h1M211 518h1M214 518h1M219 518h1M210 519h1M214 519h1M219 519h1M210 520h1M213 520h1M218 520h1M213 521h1M218 521h1M217 522h1M217 523h1"/>
<path stroke="#fff" d="M226 511h1M226 512h1M225 513h1M225 514h1M224 515h1M224 516h1M224 517h1M223 518h1M223 519h1M223 520h1M222 521h1M222 522h1M221 523h1M221 524h1"/>
<path stroke="#808080" d="M229 513h1M229 514h1M233 514h1M228 515h1M233 515h1M237 515h1M228 516h1M232 516h1M237 516h1M241 516h1M228 517h1M232 517h1M236 517h1M241 517h1M227 518h1M232 518h1M236 518h1M240 518h1M227 519h1M231 519h1M236 519h1M240 519h1M227 520h1M231 520h1M235 520h1M240 520h1M227 521h1M231 521h1M235 521h1M239 521h1M226 522h1M231 522h1M235 522h1M239 522h1M226 523h1M230 523h1M235 523h1M239 523h1M226 524h1M230 524h1M234 524h1M239 524h1M225 525h1M230 525h1M234 525h1M238 525h1M225 526h1M229 526h1M234 526h1M238 526h1M229 527h1M233 527h1M238 527h1M233 528h1M237 528h1M237 529h1"/>
<path stroke="#fff" d="M245 517h1M245 518h1M244 519h1M244 520h1M244 521h1M243 522h1M243 523h1M243 524h1M243 525h1M242 526h1M242 527h1M242 528h1M241 529h1M241 530h1"/>
<path stroke="#808080" d="M248 518h1M248 519h1M252 519h1M248 520h1M252 520h1M256 520h1M260 520h1M247 521h1M252 521h1M256 521h1M260 521h1M247 522h1M251 522h1M256 522h1M260 522h1M247 523h1M251 523h1M255 523h1M259 523h1M247 524h1M251 524h1M255 524h1M259 524h1M246 525h1M251 525h1M255 525h1M259 525h1M246 526h1M250 526h1M255 526h1M259 526h1M246 527h1M250 527h1M254 527h1M258 527h1M246 528h1M250 528h1M254 528h1M258 528h1M245 529h1M250 529h1M254 529h1M258 529h1M245 530h1M249 530h1M254 530h1M258 530h1M245 531h1M249 531h1M253 531h1M258 531h1M249 532h1M253 532h1M257 532h1M253 533h1M257 533h1M257 534h1"/>
<path stroke="#fff" d="M264 521h1M264 522h1M264 523h1M264 524h1M263 525h1M263 526h1M263 527h1M263 528h1M263 529h1M263 530h1M262 531h1M262 532h1M262 533h1M262 534h1"/>
<path stroke="#808080" d="M268 522h1M272 522h1M268 523h1M272 523h1M275 523h1M279 523h1M268 524h1M272 524h1M275 524h1M279 524h1M268 525h1M272 525h1M275 525h1M279 525h1M267 526h1M271 526h1M275 526h1M279 526h1M267 527h1M271 527h1M275 527h1M279 527h1M267 528h1M271 528h1M275 528h1M279 528h1M267 529h1M271 529h1M275 529h1M279 529h1M267 530h1M271 530h1M274 530h1M278 530h1M267 531h1M271 531h1M274 531h1M278 531h1M266 532h1M271 532h1M274 532h1M278 532h1M266 533h1M270 533h1M274 533h1M278 533h1M266 534h1M270 534h1M274 534h1M278 534h1M266 535h1M270 535h1M274 535h1M278 535h1M270 536h1M274 536h1M278 536h1M278 537h1"/>
<path stroke="#fff" d="M283 523h1M283 524h1M283 525h1M283 526h1M283 527h1M283 528h1M283 529h1M282 530h1M282 531h1M282 532h1M282 533h1M282 534h1M282 535h1M282 536h1M282 537h1"/>
<path stroke="#808080" d="M287 523h1M287 524h1M291 524h1M295 524h1M299 524h1M287 525h1M291 525h1M295 525h1M299 525h1M287 526h1M291 526h1M295 526h1M299 526h1M287 527h1M291 527h1M295 527h1M299 527h1M287 528h1M291 528h1M295 528h1M299 528h1M287 529h1M291 529h1M295 529h1M299 529h1M286 530h1M291 530h1M295 530h1M299 530h1M286 531h1M291 531h1M295 531h1M299 531h1M286 532h1M291 532h1M295 532h1M299 532h1M286 533h1M291 533h1M295 533h1M299 533h1M286 534h1M291 534h1M295 534h1M299 534h1M286 535h1M291 535h1M295 535h1M299 535h1M286 536h1M291 536h1M295 536h1M299 536h1M286 537h1M291 537h1M295 537h1M299 537h1"/>
<path stroke="#fff" d="M302 524h1M302 525h1M302 526h1M302 527h1M302 528h1M302 529h1M302 530h1M302 531h1M302 532h1M302 533h1M302 534h1M302 535h1M302 536h1M302 537h1"/>
<path stroke="#808080" d="M314 523h1M318 523h1M306 524h1M310 524h1M314 524h1M318 524h1M306 525h1M310 525h1M314 525h1M318 525h1M306 526h1M310 526h1M314 526h1M318 526h1M306 527h1M310 527h1M314 527h1M318 527h1M306 528h1M310 528h1M314 528h1M318 528h1M306 529h1M310 529h1M314 529h1M318 529h1M306 530h1M310 530h1M315 530h1M319 530h1M306 531h1M310 531h1M315 531h1M319 531h1M306 532h1M310 532h1M315 532h1M319 532h1M306 533h1M310 533h1M315 533h1M319 533h1M306 534h1M310 534h1M315 534h1M319 534h1M306 535h1M310 535h1M315 535h1M319 535h1M306 536h1M310 536h1M315 536h1M319 536h1M306 537h1M310 537h1M315 537h1M319 537h1"/>
<path stroke="#fff" d="M322 523h1M322 524h1M322 525h1M322 526h1M322 527h1M322 528h1M322 529h1M323 530h1M323 531h1M323 532h1M323 533h1M323 534h1M323 535h1M323 536h1"/>
<path stroke="#808080" d="M337 520h1M333 521h1M337 521h1M325 522h1M329 522h1M333 522h1M337 522h1M325 523h1M329 523h1M333 523h1M337 523h1M325 524h1M329 524h1M333 524h1M338 524h1M325 525h1M329 525h1M334 525h1M338 525h1M326 526h1M330 526h1M334 526h1M338 526h1M326 527h1M330 527h1M334 527h1M338 527h1M326 528h1M330 528h1M334 528h1M338 528h1M326 529h1M330 529h1M334 529h1M338 529h1M326 530h1M330 530h1M334 530h1M338 530h1M326 531h1M330 531h1M334 531h1M339 531h1M326 532h1M331 532h1M335 532h1M339 532h1M327 533h1M331 533h1M335 533h1M339 533h1M327 534h1M331 534h1M335 534h1M339 534h1M327 535h1M331 535h1M335 535h1M327 536h1"/>
<path stroke="#fff" d="M341 520h1M341 521h1M341 522h1M342 523h1M342 524h1M342 525h1M342 526h1M343 527h1M343 528h1M343 529h1M343 530h1M344 531h1M344 532h1M344 533h1"/>
<path stroke="#808080" d="M356 516h1M353 517h1M356 517h1M349 518h1M353 518h1M357 518h1M345 519h1M349 519h1M353 519h1M357 519h1M345 520h1M349 520h1M354 520h1M357 520h1M345 521h1M350 521h1M354 521h1M358 521h1M346 522h1M350 522h1M354 522h1M358 522h1M346 523h1M350 523h1M354 523h1M358 523h1M346 524h1M350 524h1M355 524h1M358 524h1M346 525h1M351 525h1M355 525h1M359 525h1M347 526h1M351 526h1M355 526h1M359 526h1M347 527h1M351 527h1M355 527h1M359 527h1M347 528h1M351 528h1M356 528h1M360 528h1M347 529h1M352 529h1M356 529h1M360 529h1M348 530h1M352 530h1M356 530h1M348 531h1M352 531h1M348 532h1"/>
<path stroke="#fff" d="M360 515h1M360 516h1M361 517h1M361 518h1M361 519h1M362 520h1M362 521h1M362 522h1M362 523h1M363 524h1M363 525h1M363 526h1M364 527h1M364 528h1"/>
<path stroke="#808080" d="M375 510h1M375 511h1M371 512h1M376 512h1M368 513h1M371 513h1M376 513h1M364 514h1M368 514h1M372 514h1M377 514h1M364 515h1M369 515h1M372 515h1M377 515h1M365 516h1M369 516h1M373 516h1M377 516h1M365 517h1M369 517h1M373 517h1M378 517h1M365 518h1M370 518h1M373 518h1M378 518h1M366 519h1M370 519h1M374 519h1M378 519h1M366 520h1M370 520h1M374 520h1M379 520h1M366 521h1M370 521h1M374 521h1M379 521h1M366 522h1M371 522h1M375 522h1M380 522h1M367 523h1M371 523h1M375 523h1M380 523h1M367 524h1M371 524h1M376 524h1M367 525h1M372 525h1M376 525h1M368 526h1M372 526h1M368 527h1"/>
<path stroke="#fff" d="M379 509h1M379 510h1M380 511h1M380 512h1M381 513h1M381 514h1M381 515h1M382 516h1M382 517h1M382 518h1M383 519h1M383 520h1M384 521h1M384 522h1"/>
<path stroke="#808080" d="M393 503h1M394 504h1M390 505h1M394 505h1M386 506h1M390 506h1M395 506h1M386 507h1M391 507h1M395 507h1M382 508h1M387 508h1M391 508h1M396 508h1M383 509h1M387 509h1M392 509h1M396 509h1M383 510h1M388 510h1M392 510h1M397 510h1M384 511h1M388 511h1M393 511h1M397 511h1M384 512h1M388 512h1M393 512h1M398 512h1M385 513h1M389 513h1M393 513h1M398 513h1M385 514h1M389 514h1M394 514h1M399 514h1M386 515h1M389 515h1M394 515h1M399 515h1M386 516h1M390 516h1M395 516h1M387 517h1M390 517h1M395 517h1M387 518h1M391 518h1M388 519h1M391 519h1M388 520h1"/>
<path stroke="#fff" d="M397 501h1M397 502h1M398 503h1M398 504h1M399 505h1M399 506h1M400 507h1M400 508h1M401 509h1M401 510h1M402 511h1M402 512h1M403 513h1M403 514h1"/>
<path stroke="#808080" d="M411 494h1M412 495h1M407 496h1M412 496h1M408 497h1M413 497h1M404 498h1M408 498h1M413 498h1M400 499h1M405 499h1M409 499h1M414 499h1M401 500h1M405 500h1M409 500h1M415 500h1M401 501h1M406 501h1M410 501h1M415 501h1M402 502h1M406 502h1M411 502h1M416 502h1M402 503h1M407 503h1M411 503h1M416 503h1M403 504h1M407 504h1M412 504h1M417 504h1M403 505h1M408 505h1M412 505h1M417 505h1M404 506h1M408 506h1M413 506h1M418 506h1M404 507h1M409 507h1M413 507h1M405 508h1M409 508h1M414 508h1M405 509h1M410 509h1M406 510h1M410 510h1M406 511h1M407 512h1"/>
<path stroke="#fff" d="M414 492h1M415 493h1M415 494h1M416 495h1M416 496h1M417 497h1M418 498h1M418 499h1M419 500h1M419 501h1M420 502h1M420 503h1M421 504h1"/>
<path stroke="#808080" d="M427 483h1M428 484h1M428 485h1M424 486h1M429 486h1M425 487h1M430 487h1M421 488h1M425 488h1M430 488h1M422 489h1M426 489h1M431 489h1M417 490h1M422 490h1M427 490h1M432 490h1M418 491h1M423 491h1M428 491h1M432 491h1M418 492h1M424 492h1M428 492h1M433 492h1M419 493h1M424 493h1M429 493h1M434 493h1M420 494h1M425 494h1M430 494h1M434 494h1M421 495h1M425 495h1M431 495h1M435 495h1M421 496h1M426 496h1M431 496h1M422 497h1M427 497h1M432 497h1M423 498h1M427 498h1M424 499h1M428 499h1M424 500h1M425 501h1"/>
<path stroke="#fff" d="M431 481h1M432 482h1M432 483h1M433 484h1M434 485h1M435 486h1M435 487h1M436 488h1M437 489h1M438 490h1M438 491h1M439 492h1"/>
<path stroke="#808080" d="M443 471h1M444 472h1M445 473h1M440 474h1M445 474h1M441 475h1M446 475h1M437 476h1M441 476h1M447 476h1M438 477h1M442 477h1M448 477h1M438 478h1M443 478h1M449 478h1M434 479h1M439 479h1M444 479h1M450 479h1M435 480h1M440 480h1M444 480h1M450 480h1M435 481h1M441 481h1M445 481h1M451 481h1M436 482h1M441 482h1M446 482h1M452 482h1M437 483h1M442 483h1M447 483h1M438 484h1M443 484h1M447 484h1M438 485h1M444 485h1M448 485h1M439 486h1M444 486h1M440 487h1M445 487h1M441 488h1M441 489h1M442 490h1"/>
<path stroke="#fff" d="M446 469h1M447 470h1M448 471h1M449 472h1M450 473h1M451 474h1M451 475h1M452 476h1M453 477h1M454 478h1M455 479h1"/>
<path stroke="#808080" d="M457 458h1M458 459h1M459 460h1M455 461h1M460 461h1M456 462h1M461 462h1M457 463h1M462 463h1M452 464h1M458 464h1M463 464h1M453 465h1M459 465h1M464 465h1M449 466h1M454 466h1M460 466h1M465 466h1M450 467h1M455 467h1M460 467h1M466 467h1M451 468h1M456 468h1M461 468h1M467 468h1M452 469h1M457 469h1M462 469h1M453 470h1M457 470h1M463 470h1M454 471h1M458 471h1M464 471h1M454 472h1M459 472h1M455 473h1M460 473h1M456 474h1M461 474h1M457 475h1M458 476h1"/>
<path stroke="#fff" d="M460 455h1M461 456h1M462 457h1M463 458h1M464 459h1M465 460h1M466 461h1M467 462h1M468 463h1M469 464h1M470 465h1"/>
<path stroke="#808080" d="M471 444h1M472 445h1M473 446h2M468 447h1M475 447h1M469 448h1M476 448h1M470 449h2M477 449h1M466 450h1M472 450h1M478 450h2M467 451h1M473 451h1M480 451h1M468 452h1M474 452h1M481 452h1M463 453h1M469 453h1M475 453h1M464 454h1M470 454h1M476 454h2M465 455h1M471 455h2M478 455h1M466 456h1M473 456h1M479 456h1M467 457h1M474 457h1M468 458h2M475 458h1M470 459h1M476 459h1M471 460h1M472 461h1M473 462h1"/>
<path stroke="#fff" d="M473 441h1M474 442h2M476 443h1M477 444h1M478 445h2M480 446h1M481 447h1M482 448h2M484 449h1"/>
<path stroke="#808080" d="M483 428h1M484 429h2M486 430h1M480 431h1M487 431h1M481 432h2M488 432h2M483 433h1M490 433h1M478 434h1M484 434h2M491 434h1M479 435h1M486 435h1M492 435h2M480 436h2M487 436h2M494 436h1M482 437h1M489 437h1M476 438h1M483 438h1M490 438h2M477 439h1M484 439h1M492 439h1M478 440h2M485 440h1M480 441h1M486 441h2M481 442h1M488 442h1M482 443h1M489 443h1M483 444h2M485 445h1M486 446h1"/>
<path stroke="#fff" d="M485 425h1M486 426h2M488 427h1M489 428h1M490 429h2M492 430h1M493 431h1M494 432h2M496 433h1"/>
<path stroke="#808080" d="M493 412h1M494 413h2M496 414h2M491 415h1M498 415h2M492 416h2M500 416h2M494 417h2M502 417h2M489 418h1M496 418h1M504 418h2M490 419h2M497 419h2M492 420h1M499 420h2M493 421h2M501 421h2M487 422h1M495 422h1M503 422h1M488 423h2M496 423h2M490 424h2M498 424h1M492 425h1M499 425h2M493 426h2M501 426h1M495 427h2M497 428h2M499 429h1"/>
<path stroke="#fff" d="M495 408h1M496 409h2M498 410h2M500 411h1M501 412h2M503 413h2M505 414h2M507 415h1"/>
<path stroke="#808080" d="M502 394h2M504 395h2M506 396h2M508 397h2M501 398h1M510 398h2M502 399h2M512 399h2M504 400h2M514 400h2M499 401h1M506 401h2M500 402h2M508 402h2M502 403h2M510 403h2M504 404h2M512 404h2M497 405h1M506 405h2M498 406h2M508 406h2M500 407h2M510 407h2M502 408h2M504 409h2M506 410h2M508 411h2"/>
<path stroke="#fff" d="M504 391h2M506 392h2M508 393h3M511 394h3M514 395h2M516 396h2"/>
<path stroke="#808080" d="M510 376h2M512 377h2M514 378h3M517 379h3M509 380h2M520 380h2M511 381h2M522 381h2M513 382h2M507 383h2M515 383h3M509 384h2M518 384h2M511 385h3M520 385h2M514 386h3M506 387h2M517 387h2M508 388h2M519 388h2M510 389h2M512 390h3M515 391h2M517 392h2"/>
<path stroke="#fff" d="M511 372h2M513 373h2M515 374h3M518 375h3M521 376h2M523 377h2"/>
<path stroke="#808080" d="M516 357h2M518 358h3M521 359h4M525 360h3M515 361h2M528 361h2M517 362h3M520 363h4M524 364h3M514 365h2M527 365h2M516 366h3M519 367h4M523 368h3M513 369h2M526 369h2M515 370h3M518 371h4M522 372h3M525 373h2"/>
<path stroke="#fff" d="M517 353h2M519 354h3M522 355h4M526 356h3M529 357h2"/>
<path stroke="#808080" d="M520 338h3M523 339h4M527 340h5M532 341h3M520 342h3M523 343h4M527 344h4M531 345h3M519 346h3M522 347h4M526 348h4M530 349h3M518 350h3M521 351h4M525 352h4M529 353h3"/>
<path stroke="#fff" d="M521 334h4M525 335h6M531 336h4"/>
<path stroke="#808080" d="M523 319h7M530 320h8M523 323h7M530 324h7M522 326h4M526 327h7M533 328h4M522 330h4M526 331h6M532 332h4"/>
<path stroke="#fff" d="M523 315h7M530 316h8"/>
<path stroke="#808080" d="M524 299h14M524 303h14M524 307h14M523 311h7M530 312h8"/>
<path stroke="#fff" d="M524 296h14"/>
<path stroke="#808080" d="M530 279h8M523 280h7M530 283h8M523 284h7M524 288h14M524 292h14"/>
<path stroke="#fff" d="M530 275h7M523 276h7"/>
<path stroke="#808080" d="M531 259h4M524 260h7M520 261h4M532 263h4M525 264h7M521 265h4M532 267h4M526 268h6M522 269h4M533 271h4M526 272h7M522 273h4"/>
<path stroke="#fff" d="M531 254h3M527 255h4M523 256h4M520 257h3"/>
<path stroke="#808080" d="M528 238h2M525 239h3M521 240h4M518 241h3M516 242h2M528 242h3M524 243h4M520 244h4M517 245h3M529 246h3M525 247h4M521 248h4M518 249h3M530 250h3M526 251h4M522 252h4M519 253h3"/>
<path stroke="#fff" d="M527 234h2M524 235h3M520 236h4M517 237h3M515 238h2"/>
<path stroke="#808080" d="M522 218h2M520 219h2M517 220h3M514 221h3M512 222h2M524 222h2M510 223h2M522 223h2M519 224h3M516 225h3M514 226h2M525 226h2M512 227h2M522 227h3M518 228h4M515 229h3M513 230h2M526 230h2M523 231h3M519 232h4M516 233h3M514 234h2"/>
<path stroke="#fff" d="M521 214h2M519 215h2M516 216h3M513 217h3M511 218h2M509 219h2"/>
<path stroke="#808080" d="M514 199h2M512 200h2M510 201h2M508 202h2M506 203h2M516 203h2M504 204h2M514 204h2M503 205h1M511 205h3M509 206h2M507 207h2M518 207h2M505 208h2M516 208h2M513 209h3M510 210h3M519 210h2M508 211h2M517 211h2M506 212h2M515 212h2M513 213h2M511 214h2M509 215h2M508 216h1"/>
<path stroke="#fff" d="M285 15h28M275 16h10M313 16h10M265 17h10M323 17h10M255 18h10M333 18h10M248 19h7M343 19h8M243 20h5M351 20h5M238 21h5M356 21h5M234 22h4M361 22h4M230 23h4M365 23h4M226 24h4M369 24h3M223 25h3M372 25h4M220 26h3M376 26h3M217 27h3M379 27h3M214 28h3M382 28h3M211 29h3M385 29h3M207 30h4M388 30h3M204 31h3M391 31h4M201 32h3M395 32h3M199 33h2M398 33h2M197 34h2M400 34h2M195 35h2M402 35h2M192 36h3M404 36h3M190 37h2M407 37h2M188 38h2M409 38h2M186 39h2M411 39h2M183 40h3M413 40h3M181 41h2M416 41h2M179 42h2M418 42h2M177 43h2M420 43h2M174 44h3M422 44h3M172 45h2M425 45h2M170 46h2M427 46h2M168 47h2M429 47h2M166 48h2M431 48h2M164 49h2M433 49h2M162 50h2M435 50h2M160 51h2M437 51h2M158 52h2M439 52h2M157 53h1M441 53h1M155 54h2M442 54h2M153 55h2M444 55h1M152 56h1M445 56h2M150 57h2M447 57h2M149 58h1M449 58h1M147 59h2M450 59h2M146 60h1M287 60h24M452 60h1M144 61h2M270 61h17M311 61h17M453 61h2M143 62h1M264 62h6M328 62h6M455 62h1M141 63h2M260 63h4M334 63h4M456 63h2M140 64h1M254 64h6M338 64h6M458 64h1M138 65h2M248 65h6M344 65h6M458 65h3M136 66h2M244 66h4M350 66h4M457 66h1M461 66h1M135 67h1M240 67h4M354 67h5M457 67h1M462 67h2M133 68h2M236 68h4M359 68h4M456 68h1M464 68h2M132 69h1M232 69h4M363 69h4M455 69h1M466 69h1M130 70h2M229 70h3M367 70h2M455 70h1M467 70h1M129 71h1M227 71h2M369 71h3M454 71h1M468 71h2M128 72h1M224 72h3M372 72h3M453 72h1M470 72h1M126 73h2M220 73h4M375 73h4M452 73h1M471 73h1M125 74h1M217 74h3M379 74h3M452 74h1M472 74h2M124 75h1M214 75h3M288 75h22M382 75h2M451 75h1M474 75h1M123 76h1M212 76h2M272 76h16M310 76h16M384 76h3M450 76h1M475 76h1M122 77h1M209 77h3M265 77h7M326 77h8M387 77h2M450 77h1M476 77h1M121 78h1M207 78h2M259 78h6M334 78h5M389 78h2M449 78h1M477 78h1M120 79h1M205 79h2M255 79h4M339 79h4M391 79h2M448 79h1M478 79h1M119 80h1M203 80h2M251 80h4M343 80h4M393 80h2M448 80h1M479 80h1M118 81h1M201 81h2M247 81h4M347 81h4M395 81h3M447 81h1M480 81h1M117 82h1M199 82h2M244 82h3M351 82h4M398 82h2M446 82h1M481 82h1M115 83h2M197 83h2M240 83h4M355 83h4M400 83h2M445 83h1M482 83h1M114 84h1M194 84h3M236 84h4M359 84h3M402 84h2M445 84h1M483 84h2M113 85h1M192 85h2M232 85h4M362 85h4M404 85h2M444 85h1M485 85h1M111 86h2M190 86h2M229 86h3M366 86h4M406 86h2M443 86h1M486 86h1M110 87h1M188 87h2M227 87h2M370 87h2M408 87h2M443 87h1M487 87h2M109 88h1M187 88h1M225 88h2M372 88h2M410 88h2M442 88h1M489 88h1M108 89h1M185 89h2M221 89h4M374 89h3M412 89h2M441 89h1M490 89h1M107 90h1M183 90h2M217 90h4M377 90h4M414 90h2M441 90h1M491 90h1M106 91h1M181 91h2M214 91h3M381 91h4M416 91h2M440 91h1M492 91h1M105 92h1M180 92h1M212 92h2M385 92h2M418 92h1M439 92h1M493 92h1M104 93h1M178 93h2M210 93h2M387 93h2M419 93h2M439 93h1M494 93h1M103 94h1M176 94h2M208 94h2M389 94h2M421 94h2M438 94h1M495 94h1M102 95h1M174 95h2M206 95h2M391 95h2M423 95h2M437 95h1M496 95h1M101 96h1M173 96h1M204 96h2M393 96h2M425 96h1M436 96h1M497 96h1M100 97h1M171 97h2M202 97h2M395 97h2M426 97h2M436 97h1M498 97h1M99 98h1M170 98h1M200 98h2M397 98h2M428 98h1M435 98h1M499 98h1M98 99h1M169 99h1M198 99h2M399 99h2M429 99h1M434 99h1M500 99h1M97 100h1M167 100h2M196 100h2M401 100h2M430 100h2M434 100h1M501 100h1M96 101h1M166 101h1M194 101h2M403 101h2M432 101h2M502 101h1M95 102h1M164 102h2M192 102h2M405 102h2M433 102h2M503 102h1M94 103h1M163 103h1M190 103h2M407 103h2M435 103h1M504 103h1M93 104h1M162 104h1M188 104h2M409 104h2M436 104h1M505 104h1M92 105h1M160 105h2M187 105h1M283 105h33M411 105h1M437 105h2M506 105h1M91 106h1M159 106h1M185 106h2M276 106h7M316 106h7M412 106h2M439 106h1M507 106h1M90 107h1M157 107h2M184 107h1M269 107h7M323 107h6M414 107h1M440 107h2M508 107h1M89 108h1M156 108h1M182 108h2M263 108h6M329 108h7M415 108h2M442 108h1M509 108h1M88 109h1M155 109h1M181 109h1M258 109h5M336 109h5M417 109h1M443 109h1M510 109h1M87 110h1M153 110h2M179 110h2M254 110h4M341 110h4M418 110h2M444 110h2M511 110h1M86 111h1M152 111h1M177 111h2M251 111h3M345 111h3M420 111h2M446 111h1M512 111h1M86 112h1M151 112h1M175 112h2M248 112h3M348 112h3M422 112h2M447 112h1M512 112h1M85 113h1M149 113h2M174 113h1M245 113h3M351 113h3M424 113h1M448 113h1M513 113h1M84 114h1M148 114h1M173 114h1M241 114h4M354 114h4M425 114h1M449 114h2M514 114h1M83 115h1M147 115h1M171 115h2M238 115h3M358 115h3M426 115h1M451 115h1M515 115h1M83 116h1M146 116h1M170 116h1M235 116h3M361 116h3M427 116h2M452 116h1M515 116h1M82 117h1M145 117h1M169 117h1M232 117h3M364 117h3M429 117h1M453 117h1M516 117h1M81 118h1M144 118h1M168 118h1M229 118h3M367 118h3M430 118h1M454 118h1M517 118h1M80 119h1M142 119h2M166 119h2M226 119h3M370 119h3M431 119h2M455 119h2M518 119h1M79 120h1M141 120h1M165 120h1M224 120h2M373 120h2M433 120h1M457 120h1M519 120h1M78 121h1M140 121h1M164 121h1M222 121h2M375 121h2M434 121h1M458 121h1M520 121h1M77 122h1M139 122h1M162 122h2M219 122h3M377 122h2M435 122h2M459 122h1M521 122h1M76 123h1M138 123h1M161 123h1M217 123h2M379 123h2M437 123h1M460 123h1M522 123h1M75 124h1M136 124h2M160 124h1M215 124h2M381 124h2M438 124h1M461 124h1M523 124h1M74 125h1M135 125h1M158 125h2M213 125h2M383 125h2M439 125h1M462 125h2M524 125h1M73 126h1M134 126h1M157 126h1M211 126h2M385 126h2M440 126h2M464 126h1M525 126h1M73 127h1M133 127h1M156 127h1M209 127h2M387 127h2M442 127h1M465 127h1M525 127h1M72 128h1M132 128h1M155 128h1M207 128h2M389 128h2M443 128h1M466 128h1M526 128h1M71 129h1M131 129h1M154 129h1M205 129h2M391 129h2M444 129h1M467 129h1M527 129h1M70 130h1M130 130h1M152 130h2M203 130h2M393 130h2M445 130h1M468 130h1M528 130h1M70 131h1M129 131h1M151 131h1M202 131h1M395 131h2M446 131h2M469 131h1M528 131h1M69 132h1M128 132h1M150 132h1M200 132h2M397 132h2M448 132h1M470 132h1M529 132h1M68 133h1M127 133h1M149 133h1M199 133h1M399 133h1M449 133h1M471 133h1M530 133h1M68 134h1M126 134h1M148 134h1M197 134h2M400 134h2M450 134h1M472 134h1M530 134h1M67 135h1M125 135h1M147 135h1M196 135h1M402 135h1M451 135h1M473 135h1M531 135h1M66 136h1M124 136h1M146 136h1M194 136h2M403 136h2M452 136h1M474 136h1M532 136h1M66 137h1M124 137h1M145 137h1M192 137h2M405 137h2M453 137h1M474 137h1M532 137h1M65 138h1M123 138h1M144 138h1M191 138h1M407 138h1M454 138h1M475 138h1M533 138h1M65 139h1M122 139h1M143 139h1M189 139h2M408 139h2M455 139h1M476 139h1M533 139h1M64 140h1M121 140h1M142 140h1M188 140h1M410 140h1M456 140h1M477 140h1M534 140h1M63 141h1M120 141h1M141 141h1M186 141h2M411 141h2M457 141h1M478 141h1M535 141h1M63 142h1M119 142h1M140 142h1M185 142h1M413 142h1M458 142h1M479 142h1M535 142h1M62 143h1M119 143h1M139 143h1M184 143h1M414 143h1M459 143h1M479 143h1M536 143h1M61 144h1M118 144h1M138 144h1M182 144h2M415 144h2M460 144h1M480 144h1M537 144h1M61 145h1M117 145h1M137 145h1M181 145h1M417 145h1M461 145h1M481 145h1M537 145h1M60 146h1M116 146h1M136 146h1M180 146h1M418 146h1M462 146h1M482 146h1M538 146h1M59 147h1M115 147h1M135 147h1M179 147h1M419 147h1M463 147h1M483 147h1M539 147h1M59 148h1M114 148h1M134 148h1M177 148h2M420 148h1M464 148h1M484 148h1M539 148h1M58 149h1M113 149h1M133 149h1M176 149h1M421 149h2M465 149h1M485 149h1M540 149h1M57 150h1M113 150h1M132 150h1M175 150h1M423 150h1M466 150h1M485 150h1M541 150h1M57 151h1M112 151h1M131 151h1M174 151h1M424 151h1M467 151h1M486 151h1M541 151h1M56 152h1M111 152h1M130 152h1M173 152h1M425 152h1M468 152h1M487 152h1M542 152h1M55 153h1M110 153h1M130 153h1M171 153h2M426 153h2M468 153h1M488 153h1M543 153h1M55 154h1M110 154h1M129 154h1M170 154h1M428 154h1M469 154h1M488 154h1M543 154h1M54 155h1M109 155h1M128 155h1M169 155h1M429 155h1M470 155h1M489 155h1M544 155h1M54 156h1M108 156h1M127 156h1M168 156h1M430 156h1M471 156h1M490 156h1M544 156h1M53 157h1M107 157h1M126 157h1M167 157h1M431 157h1M472 157h1M491 157h1M545 157h1M52 158h1M107 158h1M125 158h1M166 158h1M432 158h1M473 158h1M491 158h1M546 158h1M52 159h1M106 159h1M125 159h1M165 159h1M433 159h1M473 159h1M492 159h1M546 159h1M51 160h1M105 160h1M124 160h1M164 160h1M434 160h1M474 160h1M493 160h1M547 160h1M51 161h1M105 161h1M123 161h1M163 161h1M435 161h1M475 161h1M493 161h1M547 161h1M50 162h1M104 162h1M122 162h1M162 162h1M436 162h1M476 162h1M494 162h1M548 162h1M50 163h1M103 163h1M122 163h1M161 163h1M437 163h1M476 163h1M495 163h1M548 163h1M49 164h1M102 164h1M121 164h1M160 164h1M438 164h1M477 164h1M496 164h1M549 164h1M49 165h1M102 165h1M120 165h1M159 165h1M439 165h1M478 165h1M496 165h1M549 165h1M48 166h1M101 166h1M119 166h1M158 166h1M440 166h1M479 166h1M497 166h1M550 166h1M48 167h1M100 167h1M119 167h1M157 167h1M441 167h1M479 167h1M498 167h1M550 167h1M47 168h1M100 168h1M118 168h1M156 168h1M442 168h1M480 168h1M498 168h1M551 168h1M47 169h1M99 169h1M117 169h1M155 169h1M443 169h1M481 169h1M499 169h1M551 169h1M46 170h1M98 170h1M116 170h1M154 170h1M444 170h1M482 170h1M500 170h1M552 170h1M46 171h1M97 171h1M115 171h1M153 171h1M445 171h1M483 171h1M501 171h1M552 171h1M45 172h1M97 172h1M115 172h1M153 172h1M445 172h1M483 172h1M501 172h1M553 172h1M45 173h1M96 173h1M114 173h1M152 173h1M446 173h1M484 173h1M502 173h1M553 173h1M44 174h1M95 174h1M113 174h1M151 174h1M447 174h1M485 174h1M503 174h1M554 174h1M44 175h1M95 175h1M112 175h1M150 175h1M448 175h1M486 175h1M503 175h1M554 175h1M44 176h1M94 176h1M112 176h1M149 176h1M449 176h1M486 176h1M504 176h1M553 176h2M43 177h1M94 177h1M111 177h1M148 177h1M450 177h1M487 177h1M504 177h1M551 177h2M555 177h1M43 178h1M93 178h1M111 178h1M148 178h1M450 178h1M487 178h1M505 178h1M549 178h2M555 178h1M42 179h1M93 179h1M110 179h1M147 179h1M451 179h1M488 179h1M505 179h1M547 179h2M556 179h1M42 180h1M92 180h1M110 180h1M146 180h1M452 180h1M488 180h1M506 180h1M545 180h2M556 180h1M41 181h1M91 181h1M109 181h1M145 181h1M453 181h1M489 181h1M507 181h1M543 181h2M557 181h1M41 182h1M91 182h1M108 182h1M144 182h1M454 182h1M490 182h1M507 182h1M541 182h2M557 182h1M40 183h1M90 183h1M108 183h1M144 183h1M454 183h1M490 183h1M508 183h1M539 183h2M558 183h1M40 184h1M90 184h1M107 184h1M143 184h1M455 184h1M491 184h1M508 184h1M537 184h2M558 184h1M40 185h1M89 185h1M106 185h1M142 185h1M456 185h1M492 185h1M509 185h1M535 185h2M558 185h1M39 186h1M89 186h1M106 186h1M141 186h1M457 186h1M492 186h1M509 186h1M533 186h2M559 186h1M39 187h1M88 187h1M105 187h1M141 187h1M457 187h1M493 187h1M510 187h1M531 187h2M559 187h1M38 188h1M87 188h1M104 188h1M140 188h1M458 188h1M494 188h1M511 188h1M529 188h2M560 188h1M38 189h1M87 189h1M104 189h1M139 189h1M459 189h1M494 189h1M511 189h1M527 189h2M560 189h1M37 190h1M86 190h1M103 190h1M139 190h1M459 190h1M495 190h1M512 190h1M525 190h2M561 190h1M37 191h1M86 191h1M103 191h1M138 191h1M460 191h1M495 191h1M512 191h1M523 191h2M561 191h1M36 192h1M85 192h1M102 192h1M137 192h1M461 192h1M496 192h1M513 192h1M521 192h2M562 192h1M36 193h1M85 193h1M102 193h1M137 193h1M461 193h1M496 193h1M513 193h1M519 193h2M562 193h1M36 194h1M84 194h1M101 194h1M136 194h1M462 194h1M497 194h1M514 194h1M517 194h2M562 194h1M35 195h1M84 195h1M101 195h1M136 195h1M462 195h1M497 195h1M514 195h3M563 195h1M35 196h1M84 196h1M100 196h1M135 196h1M463 196h1M498 196h1M514 196h1M563 196h1M34 197h1M83 197h1M100 197h1M134 197h1M464 197h1M498 197h1M515 197h1M564 197h1M34 198h1M83 198h1M99 198h1M134 198h1M464 198h1M499 198h1M515 198h1M564 198h1M33 199h1M82 199h1M99 199h1M133 199h1M465 199h1M499 199h1M516 199h1M565 199h1M33 200h1M82 200h1M98 200h1M132 200h1M466 200h1M500 200h1M516 200h1M565 200h1M32 201h1M81 201h1M98 201h1M132 201h1M466 201h1M500 201h1M517 201h1M566 201h1M32 202h1M81 202h1M97 202h1M131 202h1M467 202h1M501 202h1M517 202h1M566 202h1M32 203h1M80 203h1M97 203h1M130 203h1M468 203h1M501 203h1M518 203h1M566 203h1M31 204h1M80 204h1M96 204h1M130 204h1M468 204h1M502 204h1M518 204h1M567 204h1M31 205h1M79 205h1M96 205h1M129 205h1M469 205h1M502 205h1M519 205h1M567 205h1M31 206h1M79 206h1M95 206h1M129 206h1M469 206h1M503 206h1M519 206h1M567 206h1M30 207h1M78 207h1M95 207h1M128 207h1M470 207h1M503 207h1M520 207h1M568 207h1M30 208h1M78 208h1M94 208h1M128 208h1M470 208h1M504 208h1M520 208h1M568 208h1M30 209h1M77 209h1M94 209h1M127 209h1M471 209h1M504 209h1M521 209h1M568 209h1M30 210h1M77 210h1M93 210h1M127 210h1M471 210h1M505 210h1M521 210h1M568 210h1M29 211h1M77 211h1M93 211h1M126 211h1M472 211h1M505 211h1M521 211h1M569 211h1M29 212h1M76 212h1M92 212h1M126 212h1M472 212h1M506 212h1M522 212h1M569 212h1M29 213h1M76 213h1M92 213h1M125 213h1M473 213h1M506 213h1M522 213h1M569 213h1M28 214h1M75 214h1M91 214h1M125 214h1M473 214h1M507 214h1M523 214h1M570 214h1M28 215h1M75 215h1M91 215h1M124 215h1M474 215h1M507 215h1M523 215h1M570 215h1M28 216h1M75 216h1M91 216h1M124 216h1M474 216h1M507 216h1M523 216h1M570 216h1M27 217h1M74 217h1M90 217h1M123 217h1M475 217h1M508 217h1M524 217h1M571 217h1M27 218h1M74 218h1M90 218h1M123 218h1M475 218h1M508 218h1M524 218h1M571 218h1M27 219h1M74 219h1M90 219h1M122 219h1M476 219h1M508 219h1M524 219h1M571 219h1M26 220h1M73 220h1M90 220h1M122 220h1M476 220h1M508 220h1M525 220h1M572 220h1M26 221h1M73 221h1M89 221h1M122 221h1M476 221h1M509 221h1M525 221h1M572 221h1M26 222h1M73 222h1M89 222h1M121 222h1M477 222h1M509 222h1M525 222h1M572 222h1M25 223h1M73 223h1M89 223h1M121 223h1M477 223h1M509 223h1M525 223h1M573 223h1M25 224h1M72 224h1M89 224h1M120 224h1M478 224h1M509 224h1M526 224h1M573 224h1M25 225h1M72 225h1M88 225h1M120 225h1M478 225h1M510 225h1M526 225h1M573 225h1M24 226h1M72 226h1M88 226h1M119 226h1M479 226h1M510 226h1M526 226h1M574 226h1M24 227h1M71 227h1M87 227h1M119 227h1M479 227h1M511 227h1M527 227h1M574 227h1M24 228h1M71 228h1M87 228h1M119 228h1M479 228h1M511 228h1M527 228h1M574 228h1M24 229h1M70 229h1M86 229h1M118 229h1M480 229h1M512 229h1M528 229h1M574 229h1M23 230h1M70 230h1M86 230h1M118 230h1M480 230h1M512 230h1M528 230h1M575 230h1M23 231h1M70 231h1M86 231h1M118 231h1M480 231h1M512 231h1M528 231h1M575 231h1M23 232h1M69 232h1M85 232h1M117 232h1M481 232h1M513 232h1M529 232h1M575 232h1M23 233h1M69 233h1M85 233h1M117 233h1M481 233h1M513 233h1M529 233h1M575 233h1M22 234h1M69 234h1M85 234h1M117 234h1M481 234h1M513 234h1M529 234h1M576 234h1M22 235h1M69 235h1M85 235h1M116 235h1M482 235h1M513 235h1M529 235h1M576 235h1M22 236h1M68 236h1M84 236h1M116 236h1M482 236h1M514 236h1M530 236h1M576 236h1M22 237h1M68 237h1M84 237h1M116 237h1M482 237h1M514 237h1M530 237h1M576 237h1M21 238h1M68 238h1M84 238h1M115 238h1M483 238h1M514 238h1M530 238h1M577 238h1M21 239h1M68 239h1M84 239h1M115 239h1M483 239h1M514 239h1M530 239h1M577 239h1M21 240h1M67 240h1M83 240h1M115 240h1M483 240h1M515 240h1M531 240h1M577 240h1M21 241h1M67 241h1M83 241h1M114 241h1M484 241h1M515 241h1M531 241h1M577 241h1M21 242h1M67 242h1M83 242h1M114 242h1M484 242h1M515 242h1M531 242h1M577 242h1M20 243h1M67 243h1M83 243h1M114 243h1M484 243h1M515 243h1M531 243h1M578 243h1M20 244h1M66 244h1M82 244h1M114 244h1M484 244h1M516 244h1M532 244h1M578 244h1M20 245h1M66 245h1M82 245h1M113 245h1M485 245h1M516 245h1M532 245h1M578 245h1M20 246h1M66 246h1M82 246h1M113 246h1M485 246h1M516 246h1M532 246h1M578 246h1M20 247h1M66 247h1M81 247h1M113 247h1M485 247h1M517 247h1M532 247h1M578 247h1M19 248h1M65 248h1M81 248h1M112 248h1M486 248h1M517 248h1M533 248h1M579 248h1M19 249h1M65 249h1M81 249h1M112 249h1M486 249h1M517 249h1M533 249h1M579 249h1M19 250h1M65 250h1M81 250h1M112 250h1M486 250h1M517 250h1M533 250h1M579 250h1M19 251h1M65 251h1M80 251h1M111 251h1M487 251h1M518 251h1M533 251h1M579 251h1M19 252h1M65 252h1M80 252h1M111 252h1M487 252h1M518 252h1M533 252h1M579 252h1M19 253h1M65 253h1M80 253h1M111 253h1M487 253h1M518 253h1M533 253h1M579 253h1M19 254h1M64 254h1M80 254h1M110 254h1M488 254h1M518 254h1M534 254h1M579 254h1M18 255h1M64 255h1M79 255h1M110 255h1M488 255h1M519 255h1M534 255h1M580 255h1M18 256h1M64 256h1M79 256h1M110 256h1M488 256h1M519 256h1M534 256h1M580 256h1M18 257h1M64 257h1M79 257h1M110 257h1M488 257h1M519 257h1M534 257h1M580 257h1M18 258h1M64 258h1M79 258h1M109 258h1M489 258h1M519 258h1M534 258h1M580 258h1M18 259h1M64 259h1M78 259h1M109 259h1M489 259h1M520 259h1M534 259h1M580 259h1M18 260h1M63 260h1M78 260h1M109 260h1M489 260h1M520 260h1M535 260h1M580 260h1M18 261h1M63 261h1M78 261h1M109 261h1M489 261h1M520 261h1M535 261h1M580 261h1M18 262h1M63 262h1M78 262h1M109 262h1M489 262h1M520 262h1M535 262h1M580 262h1M18 263h1M63 263h1M78 263h1M108 263h1M490 263h1M520 263h1M535 263h1M580 263h1M18 264h1M62 264h1M78 264h1M108 264h1M490 264h1M520 264h1M536 264h1M580 264h1M17 265h1M62 265h1M77 265h1M108 265h1M490 265h1M521 265h1M536 265h1M581 265h1M17 266h1M62 266h1M77 266h1M108 266h1M490 266h1M521 266h1M536 266h1M581 266h1M17 267h1M62 267h1M77 267h1M108 267h1M490 267h1M521 267h1M536 267h1M581 267h1M17 268h1M62 268h1M77 268h1M108 268h1M490 268h1M521 268h1M536 268h1M581 268h1M17 269h1M62 269h1M77 269h1M107 269h1M491 269h1M521 269h1M536 269h1M581 269h1M17 270h1M61 270h1M77 270h1M107 270h1M491 270h1M521 270h1M537 270h1M581 270h1M17 271h1M61 271h1M77 271h1M107 271h1M491 271h1M521 271h1M537 271h1M581 271h1M17 272h1M61 272h1M76 272h1M107 272h1M491 272h1M522 272h1M537 272h1M581 272h1M17 273h1M61 273h1M76 273h1M107 273h1M491 273h1M522 273h1M537 273h1M581 273h1M17 274h1M61 274h1M76 274h1M107 274h1M491 274h1M522 274h1M537 274h1M581 274h1M16 275h1M61 275h1M76 275h1M107 275h1M491 275h1M522 275h1M537 275h1M582 275h1M16 276h1M61 276h1M76 276h1M106 276h1M492 276h1M522 276h1M537 276h1M582 276h1M16 277h1M61 277h1M76 277h1M106 277h1M492 277h1M522 277h1M537 277h1M582 277h1M16 278h1M61 278h1M76 278h1M106 278h1M492 278h1M522 278h1M537 278h1M582 278h1M16 279h1M61 279h1M76 279h1M106 279h1M492 279h1M522 279h1M537 279h1M582 279h1M16 280h1M61 280h1M76 280h1M106 280h1M492 280h1M522 280h1M537 280h1M582 280h1M16 281h1M61 281h1M76 281h1M106 281h1M492 281h1M522 281h1M537 281h1M582 281h1M16 282h1M61 282h1M76 282h1M106 282h1M492 282h1M522 282h1M537 282h1M582 282h1M16 283h1M61 283h1M76 283h1M105 283h1M493 283h1M522 283h1M537 283h1M582 283h1M16 284h1M61 284h1M76 284h1M105 284h1M493 284h1M522 284h1M537 284h1M582 284h1M15 285h1M61 285h1M76 285h1M105 285h1M493 285h1M522 285h1M537 285h1M583 285h1M15 286h1M61 286h1M76 286h1M105 286h1M493 286h1M522 286h1M537 286h1M583 286h1M15 287h1M60 287h1M76 287h1M105 287h1M493 287h1M522 287h1M538 287h1M583 287h1M15 288h1M60 288h1M75 288h1M105 288h1M493 288h1M523 288h1M538 288h1M583 288h1M15 289h1M60 289h1M75 289h1M105 289h1M493 289h1M523 289h1M538 289h1M583 289h1M15 290h1M60 290h1M75 290h1M105 290h1M493 290h1M523 290h1M538 290h1M583 290h1M15 291h1M60 291h1M75 291h1M105 291h1M493 291h1M523 291h1M538 291h1M583 291h1M15 292h1M60 292h1M75 292h1M105 292h1M493 292h1M523 292h1M538 292h1M583 292h1M15 293h1M60 293h1M75 293h1M105 293h1M493 293h1M523 293h1M538 293h1M583 293h1M15 294h1M60 294h1M75 294h1M105 294h1M493 294h1M523 294h1M538 294h1M583 294h1M15 295h1M60 295h1M75 295h1M105 295h1M493 295h1M523 295h1M538 295h1M583 295h1M15 296h1M60 296h1M75 296h1M105 296h1M493 296h1M523 296h1M538 296h1M583 296h1M15 297h1M60 297h1M75 297h1M105 297h1M493 297h1M523 297h1M538 297h1M583 297h1M15 298h1M60 298h1M75 298h1M105 298h1M493 298h1M523 298h1M538 298h1M583 298h1M15 299h1M60 299h1M75 299h31M493 299h1M523 299h1M538 299h1M583 299h1M15 300h1M60 300h1M75 300h1M105 300h1M493 300h1M523 300h1M538 300h1M583 300h1M15 301h1M60 301h1M75 301h1M105 301h1M493 301h1M523 301h1M538 301h1M583 301h1M15 302h1M60 302h1M75 302h1M105 302h1M493 302h1M523 302h1M538 302h1M583 302h1M15 303h1M60 303h1M75 303h1M105 303h1M493 303h1M523 303h1M538 303h1M583 303h1M15 304h1M60 304h1M75 304h1M105 304h1M493 304h1M523 304h1M538 304h1M583 304h1M15 305h1M60 305h1M75 305h1M105 305h1M493 305h1M523 305h1M538 305h1M583 305h1M15 306h1M60 306h1M75 306h1M105 306h1M493 306h1M523 306h1M538 306h1M583 306h1M15 307h1M60 307h1M75 307h1M105 307h1M493 307h1M523 307h1M538 307h1M583 307h1M15 308h1M60 308h1M75 308h1M105 308h1M493 308h1M523 308h1M538 308h1M583 308h1M15 309h1M60 309h1M75 309h1M105 309h1M493 309h1M523 309h1M538 309h1M583 309h1M15 310h1M60 310h1M76 310h1M105 310h1M493 310h1M522 310h1M538 310h1M583 310h1M15 311h1M61 311h1M76 311h1M105 311h1M493 311h1M522 311h1M537 311h1M583 311h1M15 312h1M61 312h1M76 312h1M105 312h1M493 312h1M522 312h1M537 312h1M583 312h1M16 313h1M61 313h1M76 313h1M105 313h1M493 313h1M522 313h1M537 313h1M582 313h1M16 314h1M61 314h1M76 314h1M105 314h1M493 314h1M522 314h1M537 314h1M582 314h1M16 315h1M61 315h1M76 315h1M105 315h1M493 315h1M522 315h1M537 315h1M582 315h1M16 316h1M61 316h1M76 316h1M106 316h1M492 316h1M522 316h1M537 316h1M582 316h1M16 317h1M61 317h1M76 317h1M106 317h1M492 317h1M522 317h1M537 317h1M582 317h1M16 318h1M61 318h1M76 318h1M106 318h1M492 318h1M522 318h1M537 318h1M582 318h1M16 319h1M61 319h1M76 319h1M106 319h1M492 319h1M522 319h1M537 319h1M582 319h1M16 320h1M61 320h1M76 320h1M106 320h1M492 320h1M522 320h1M537 320h1M582 320h1M16 321h1M61 321h1M76 321h1M106 321h1M492 321h1M522 321h1M537 321h1M582 321h1M16 322h1M61 322h1M76 322h1M106 322h1M492 322h1M522 322h1M537 322h1M582 322h1M17 323h1M61 323h1M76 323h1M107 323h1M491 323h1M522 323h1M537 323h1M581 323h1M17 324h1M61 324h1M76 324h1M107 324h1M491 324h1M522 324h1M537 324h1M581 324h1M17 325h1M61 325h1M76 325h1M107 325h1M491 325h1M522 325h1M537 325h1M581 325h1M17 326h1M61 326h1M77 326h1M107 326h1M491 326h1M521 326h1M537 326h1M581 326h1M17 327h1M61 327h1M77 327h1M107 327h1M491 327h1M521 327h1M537 327h1M581 327h1M17 328h1M62 328h1M77 328h1M107 328h1M491 328h1M521 328h1M536 328h1M581 328h1M17 329h1M62 329h1M77 329h1M108 329h1M490 329h1M521 329h1M536 329h1M581 329h1M17 330h1M62 330h1M77 330h1M108 330h1M490 330h1M521 330h1M536 330h1M581 330h1M17 331h1M62 331h1M77 331h1M108 331h1M490 331h1M521 331h1M536 331h1M581 331h1M17 332h1M62 332h1M77 332h1M108 332h1M490 332h1M521 332h1M536 332h1M581 332h1M18 333h1M62 333h1M77 333h1M108 333h1M490 333h1M521 333h1M536 333h1M580 333h1M18 334h1M63 334h1M78 334h1M108 334h1M490 334h1M520 334h1M535 334h1M580 334h1M18 335h1M63 335h1M78 335h1M108 335h1M490 335h1M520 335h1M535 335h1M580 335h1M18 336h1M63 336h1M78 336h1M109 336h1M489 336h1M520 336h1M535 336h1M580 336h1M18 337h1M63 337h1M78 337h1M109 337h1M489 337h1M520 337h1M535 337h1M580 337h1M18 338h1M64 338h1M78 338h1M109 338h1M489 338h1M520 338h1M534 338h1M580 338h1M18 339h1M64 339h1M79 339h1M109 339h1M489 339h1M519 339h1M534 339h1M580 339h1M18 340h1M64 340h1M79 340h1M109 340h1M489 340h1M519 340h1M534 340h1M580 340h1M18 341h1M64 341h1M79 341h1M110 341h1M488 341h1M519 341h1M534 341h1M580 341h1M18 342h1M64 342h1M79 342h1M110 342h1M488 342h1M519 342h1M534 342h1M580 342h1M19 343h1M64 343h1M80 343h1M110 343h1M488 343h1M518 343h1M534 343h1M579 343h1M19 344h1M65 344h1M80 344h1M110 344h1M488 344h1M518 344h1M533 344h1M579 344h1M19 345h1M65 345h1M80 345h1M111 345h1M487 345h1M518 345h1M533 345h1M579 345h1M19 346h1M65 346h1M80 346h1M111 346h1M487 346h1M518 346h1M533 346h1M579 346h1M19 347h1M65 347h1M81 347h1M111 347h1M487 347h1M517 347h1M533 347h1M579 347h1M19 348h1M65 348h1M81 348h1M112 348h1M486 348h1M517 348h1M533 348h1M579 348h1M19 349h1M65 349h1M81 349h1M112 349h1M486 349h1M517 349h1M533 349h1M579 349h1M19 350h1M66 350h1M81 350h1M112 350h1M486 350h1M517 350h1M532 350h1M579 350h1M20 351h1M66 351h1M82 351h1M113 351h1M485 351h1M516 351h1M532 351h1M578 351h1M20 352h1M66 352h1M82 352h1M113 352h1M485 352h1M516 352h1M532 352h1M578 352h1M20 353h1M66 353h1M82 353h1M113 353h1M485 353h1M516 353h1M532 353h1M578 353h1M20 354h1M67 354h1M82 354h1M114 354h1M484 354h1M516 354h1M531 354h1M578 354h1M20 355h1M67 355h1M83 355h1M114 355h1M484 355h1M515 355h1M531 355h1M578 355h1M21 356h1M67 356h1M83 356h1M114 356h1M484 356h1M515 356h1M531 356h1M577 356h1M21 357h1M67 357h1M83 357h1M114 357h1M484 357h1M515 357h1M531 357h1M577 357h1M21 358h1M67 358h1M83 358h1M115 358h1M483 358h1M515 358h1M531 358h1M577 358h1M21 359h1M68 359h1M84 359h1M115 359h1M483 359h1M514 359h1M530 359h1M577 359h1M21 360h1M68 360h1M84 360h1M115 360h1M483 360h1M514 360h1M530 360h1M577 360h1M22 361h1M68 361h1M84 361h1M116 361h1M482 361h1M514 361h1M530 361h1M576 361h1M22 362h1M68 362h1M85 362h1M116 362h1M482 362h1M513 362h1M530 362h1M576 362h1M22 363h1M69 363h1M85 363h1M116 363h1M482 363h1M513 363h1M529 363h1M576 363h1M22 364h1M69 364h1M85 364h1M117 364h1M481 364h1M513 364h1M529 364h1M576 364h1M23 365h1M69 365h1M85 365h1M117 365h1M481 365h1M513 365h1M529 365h1M575 365h1M23 366h1M69 366h1M86 366h1M117 366h1M481 366h1M512 366h1M529 366h1M575 366h1M23 367h1M70 367h1M86 367h1M118 367h1M480 367h1M512 367h1M528 367h1M575 367h1M23 368h1M70 368h1M86 368h1M118 368h1M480 368h1M512 368h1M528 368h1M575 368h1M24 369h1M71 369h1M86 369h1M118 369h1M480 369h1M512 369h1M527 369h1M574 369h1M24 370h1M71 370h1M87 370h1M119 370h1M479 370h1M511 370h1M527 370h1M574 370h1M24 371h1M71 371h1M87 371h1M119 371h1M479 371h1M511 371h1M527 371h1M574 371h1M25 372h1M72 372h1M88 372h1M119 372h1M479 372h1M510 372h1M526 372h1M573 372h1M25 373h1M72 373h1M88 373h1M120 373h1M478 373h1M510 373h1M526 373h1M573 373h1M25 374h1M72 374h1M89 374h1M120 374h1M478 374h1M509 374h1M526 374h1M573 374h1M25 375h1M73 375h1M89 375h1M121 375h1M477 375h1M509 375h1M525 375h1M573 375h1M26 376h1M73 376h1M89 376h1M121 376h1M477 376h1M509 376h1M525 376h1M572 376h1M26 377h1M73 377h1M90 377h1M122 377h1M476 377h1M508 377h1M525 377h1M572 377h1M26 378h1M73 378h1M90 378h1M122 378h1M476 378h1M508 378h1M525 378h1M572 378h1M27 379h1M74 379h1M90 379h1M123 379h1M475 379h1M508 379h1M524 379h1M571 379h1M27 380h1M74 380h1M90 380h1M123 380h1M475 380h1M508 380h1M524 380h1M571 380h1M27 381h1M74 381h1M91 381h1M124 381h1M474 381h1M507 381h1M524 381h1M571 381h1M28 382h1M75 382h1M91 382h1M124 382h1M474 382h1M507 382h1M523 382h1M570 382h1M28 383h1M75 383h1M91 383h1M125 383h1M473 383h1M507 383h1M523 383h1M570 383h1M28 384h1M76 384h1M91 384h1M125 384h1M473 384h1M507 384h1M522 384h1M570 384h1M29 385h1M76 385h1M92 385h1M126 385h1M472 385h1M506 385h1M522 385h1M569 385h1M29 386h1M76 386h1M92 386h1M126 386h1M472 386h1M506 386h1M522 386h1M569 386h1M29 387h1M77 387h1M93 387h1M127 387h1M471 387h1M505 387h1M521 387h1M569 387h1M30 388h1M77 388h1M93 388h1M125 388h3M471 388h1M505 388h1M521 388h1M568 388h1M30 389h1M78 389h1M94 389h1M123 389h2M128 389h1M470 389h1M504 389h1M520 389h1M568 389h1M30 390h1M78 390h1M94 390h1M121 390h2M128 390h1M470 390h1M504 390h1M520 390h1M568 390h1M31 391h1M79 391h1M95 391h1M119 391h2M129 391h1M469 391h1M503 391h1M519 391h1M567 391h1M31 392h1M79 392h1M95 392h1M117 392h2M129 392h1M469 392h1M503 392h1M519 392h1M567 392h1M31 393h1M80 393h1M96 393h1M115 393h2M130 393h1M468 393h1M502 393h1M518 393h1M567 393h1M31 394h1M80 394h1M96 394h1M113 394h2M130 394h1M468 394h1M502 394h1M518 394h1M567 394h1M32 395h1M81 395h1M97 395h1M111 395h2M131 395h1M467 395h1M501 395h1M517 395h1M566 395h1M32 396h1M81 396h1M97 396h1M109 396h2M131 396h1M467 396h1M501 396h1M517 396h1M566 396h1M32 397h1M81 397h1M98 397h1M107 397h2M132 397h1M466 397h1M500 397h1M517 397h1M566 397h1M33 398h1M82 398h1M98 398h1M105 398h2M132 398h1M466 398h1M500 398h1M516 398h1M565 398h1M33 399h1M82 399h1M99 399h1M103 399h2M133 399h1M465 399h1M499 399h1M516 399h1M565 399h1M34 400h1M83 400h1M99 400h1M101 400h2M134 400h1M464 400h1M499 400h1M515 400h1M564 400h1M34 401h1M83 401h1M100 401h1M134 401h1M464 401h1M498 401h1M515 401h1M564 401h1M35 402h1M84 402h1M100 402h1M135 402h1M463 402h1M498 402h1M514 402h1M563 402h1M35 403h1M84 403h1M101 403h1M136 403h1M462 403h1M497 403h1M514 403h1M563 403h1M36 404h1M85 404h1M101 404h1M136 404h1M462 404h1M497 404h1M513 404h1M562 404h1M36 405h1M85 405h1M102 405h1M137 405h1M461 405h1M496 405h1M513 405h1M562 405h1M36 406h1M86 406h1M102 406h1M137 406h1M461 406h1M496 406h1M512 406h1M562 406h1M37 407h1M86 407h1M103 407h1M138 407h1M460 407h1M495 407h1M512 407h1M561 407h1M37 408h1M87 408h1M103 408h1M139 408h1M459 408h1M495 408h1M511 408h1M561 408h1M38 409h1M87 409h1M104 409h1M139 409h1M459 409h1M494 409h1M511 409h1M560 409h1M38 410h1M88 410h1M104 410h1M140 410h1M458 410h1M494 410h1M510 410h1M560 410h1M39 411h1M88 411h1M105 411h1M141 411h1M457 411h1M493 411h1M510 411h1M559 411h1M39 412h1M89 412h1M106 412h1M141 412h1M457 412h1M492 412h1M509 412h1M559 412h1M40 413h1M89 413h1M106 413h1M142 413h1M456 413h1M492 413h1M509 413h1M558 413h1M40 414h1M90 414h1M107 414h1M143 414h1M455 414h1M491 414h1M508 414h1M558 414h1M40 415h1M90 415h1M108 415h1M144 415h1M454 415h1M490 415h1M508 415h1M558 415h1M41 416h1M91 416h1M108 416h1M144 416h1M454 416h1M490 416h1M507 416h1M557 416h1M41 417h1M91 417h1M109 417h1M145 417h1M453 417h1M489 417h1M507 417h1M557 417h1M42 418h1M92 418h1M110 418h1M146 418h1M452 418h1M488 418h1M506 418h1M556 418h1M42 419h1M93 419h1M110 419h1M147 419h1M451 419h1M488 419h1M505 419h1M556 419h1M43 420h1M93 420h1M111 420h1M148 420h1M450 420h1M487 420h1M505 420h1M555 420h1M43 421h1M94 421h1M111 421h1M149 421h1M449 421h1M487 421h1M504 421h1M555 421h1M44 422h1M94 422h1M112 422h1M149 422h1M449 422h1M486 422h1M504 422h1M554 422h1M44 423h1M95 423h1M112 423h1M150 423h1M448 423h1M486 423h1M503 423h1M554 423h1M44 424h1M95 424h1M113 424h1M151 424h1M447 424h1M485 424h1M503 424h1M554 424h1M45 425h1M96 425h1M114 425h1M152 425h1M446 425h1M484 425h1M502 425h1M553 425h1M45 426h1M97 426h1M115 426h1M153 426h1M445 426h1M483 426h1M501 426h1M553 426h1M46 427h1M97 427h1M116 427h1M153 427h1M445 427h1M482 427h1M501 427h1M552 427h1M46 428h1M98 428h1M116 428h1M154 428h1M444 428h1M482 428h1M500 428h1M552 428h1M47 429h1M99 429h1M117 429h1M155 429h1M443 429h1M481 429h1M499 429h1M551 429h1M47 430h1M100 430h1M118 430h1M156 430h1M442 430h1M480 430h1M498 430h1M551 430h1M48 431h1M100 431h1M119 431h1M157 431h1M441 431h1M479 431h1M498 431h1M550 431h1M48 432h1M101 432h1M119 432h1M158 432h1M440 432h1M479 432h1M497 432h1M550 432h1M49 433h1M102 433h1M120 433h1M159 433h1M439 433h1M478 433h1M496 433h1M549 433h1M49 434h1M102 434h1M121 434h1M160 434h1M438 434h1M477 434h1M496 434h1M549 434h1M50 435h1M103 435h1M122 435h1M161 435h1M437 435h1M476 435h1M495 435h1M548 435h1M50 436h1M104 436h1M122 436h1M162 436h1M436 436h1M476 436h1M494 436h1M548 436h1M51 437h1M105 437h1M123 437h1M163 437h1M435 437h1M475 437h1M493 437h1M547 437h1M51 438h1M105 438h1M124 438h1M164 438h1M434 438h1M474 438h1M493 438h1M547 438h1M52 439h1M106 439h1M125 439h1M165 439h1M433 439h1M473 439h1M492 439h1M546 439h1M52 440h1M107 440h1M126 440h1M166 440h1M432 440h1M472 440h1M491 440h1M546 440h1M53 441h1M107 441h1M126 441h1M167 441h1M431 441h1M472 441h1M491 441h1M545 441h1M54 442h1M108 442h1M127 442h1M168 442h1M430 442h1M471 442h1M490 442h1M544 442h1M54 443h1M109 443h1M128 443h1M169 443h1M429 443h1M470 443h1M489 443h1M544 443h1M55 444h1M110 444h1M129 444h1M170 444h1M428 444h1M469 444h1M488 444h1M543 444h1M56 445h1M110 445h1M130 445h1M171 445h2M426 445h2M468 445h1M488 445h1M542 445h1M56 446h1M111 446h1M131 446h1M173 446h1M425 446h1M467 446h1M487 446h1M542 446h1M57 447h1M112 447h1M131 447h1M174 447h1M424 447h1M467 447h1M486 447h1M541 447h1M57 448h1M113 448h1M132 448h1M175 448h1M423 448h1M466 448h1M485 448h1M541 448h1M58 449h1M114 449h1M133 449h1M176 449h1M421 449h2M465 449h1M484 449h1M540 449h1M59 450h1M114 450h1M134 450h1M177 450h2M420 450h1M464 450h1M484 450h1M539 450h1M59 451h1M115 451h1M135 451h1M179 451h1M419 451h1M463 451h1M483 451h1M539 451h1M60 452h1M116 452h1M136 452h1M180 452h1M418 452h1M462 452h1M482 452h1M538 452h1M61 453h1M117 453h1M137 453h1M181 453h1M417 453h1M461 453h1M481 453h1M537 453h1M61 454h1M118 454h1M138 454h1M182 454h2M415 454h2M460 454h1M480 454h1M537 454h1M62 455h1M119 455h1M139 455h1M184 455h1M414 455h1M459 455h1M479 455h1M536 455h1M63 456h1M119 456h1M140 456h1M185 456h1M413 456h1M458 456h1M479 456h1M535 456h1M63 457h1M120 457h1M141 457h1M186 457h2M411 457h2M457 457h1M478 457h1M535 457h1M64 458h1M121 458h1M142 458h1M188 458h1M410 458h1M456 458h1M477 458h1M534 458h1M65 459h1M122 459h1M143 459h1M189 459h2M408 459h2M455 459h1M476 459h1M533 459h1M65 460h1M123 460h1M144 460h1M191 460h1M407 460h1M454 460h1M475 460h1M533 460h1M66 461h1M124 461h1M145 461h1M192 461h2M405 461h2M453 461h1M474 461h1M532 461h1M67 462h1M125 462h1M146 462h1M194 462h2M403 462h2M452 462h1M473 462h1M531 462h1M67 463h1M125 463h1M147 463h1M196 463h1M402 463h1M451 463h1M473 463h1M531 463h1M68 464h1M126 464h1M148 464h1M197 464h2M400 464h2M450 464h1M472 464h1M530 464h1M68 465h1M127 465h1M149 465h1M199 465h1M399 465h1M449 465h1M471 465h1M530 465h1M69 466h1M128 466h1M150 466h1M200 466h2M397 466h2M448 466h1M470 466h1M529 466h1M70 467h1M129 467h1M151 467h1M202 467h1M395 467h2M446 467h2M469 467h1M528 467h1M71 468h1M130 468h1M152 468h2M203 468h2M393 468h2M445 468h1M468 468h1M527 468h1M71 469h1M131 469h1M154 469h1M205 469h2M391 469h2M444 469h1M467 469h1M527 469h1M72 470h1M132 470h1M155 470h1M207 470h2M389 470h2M443 470h1M466 470h1M526 470h1M73 471h1M133 471h1M156 471h1M209 471h2M387 471h2M442 471h1M465 471h1M525 471h1M74 472h1M134 472h1M157 472h1M211 472h2M385 472h2M440 472h2M464 472h1M524 472h1M74 473h1M135 473h1M158 473h2M213 473h2M383 473h2M439 473h1M462 473h2M524 473h1M75 474h1M136 474h2M160 474h1M215 474h2M381 474h2M438 474h1M461 474h1M523 474h1M76 475h1M138 475h1M161 475h1M217 475h2M379 475h2M437 475h1M460 475h1M522 475h1M77 476h1M139 476h1M162 476h2M219 476h3M377 476h2M435 476h2M459 476h1M521 476h1M78 477h1M140 477h1M164 477h1M222 477h2M375 477h2M434 477h1M458 477h1M520 477h1M79 478h1M141 478h1M165 478h1M224 478h2M373 478h2M433 478h1M457 478h1M519 478h1M80 479h1M142 479h2M166 479h2M226 479h3M370 479h3M431 479h2M455 479h2M518 479h1M81 480h1M144 480h1M168 480h1M229 480h3M367 480h3M430 480h1M454 480h1M517 480h1M82 481h1M145 481h1M169 481h1M232 481h3M364 481h3M429 481h1M453 481h1M516 481h1M83 482h1M146 482h1M170 482h1M235 482h3M361 482h3M427 482h2M452 482h1M515 482h1M84 483h1M147 483h1M171 483h2M238 483h3M358 483h3M426 483h1M451 483h1M514 483h1M84 484h1M148 484h1M173 484h1M241 484h4M354 484h4M425 484h1M449 484h2M514 484h1M85 485h1M149 485h2M174 485h1M245 485h3M351 485h3M424 485h1M448 485h1M513 485h1M86 486h1M151 486h1M175 486h2M248 486h3M348 486h3M422 486h2M447 486h1M512 486h1M87 487h1M152 487h1M177 487h2M251 487h3M345 487h3M420 487h2M446 487h1M511 487h1M87 488h1M153 488h2M179 488h2M254 488h4M341 488h4M418 488h2M444 488h2M511 488h1M88 489h1M155 489h1M181 489h1M258 489h5M336 489h5M417 489h1M443 489h1M510 489h1M89 490h1M156 490h1M182 490h2M263 490h6M329 490h7M415 490h2M442 490h1M509 490h1M90 491h1M157 491h2M184 491h1M269 491h7M323 491h6M414 491h1M440 491h2M508 491h1M91 492h1M159 492h1M185 492h2M276 492h7M316 492h7M412 492h2M439 492h1M507 492h1M92 493h1M160 493h2M187 493h1M283 493h33M411 493h1M437 493h2M506 493h1M93 494h1M162 494h1M188 494h2M409 494h2M436 494h1M505 494h1M94 495h1M163 495h1M190 495h2M407 495h2M435 495h1M504 495h1M95 496h1M164 496h2M192 496h2M405 496h2M433 496h2M503 496h1M96 497h1M166 497h1M194 497h2M403 497h2M432 497h1M502 497h1M97 498h1M167 498h2M196 498h2M401 498h2M430 498h2M501 498h1M98 499h1M169 499h1M198 499h2M399 499h2M429 499h1M500 499h1M99 500h1M170 500h1M200 500h2M397 500h2M428 500h1M499 500h1M100 501h1M171 501h2M202 501h2M395 501h2M426 501h2M498 501h1M101 502h1M173 502h1M204 502h2M393 502h2M425 502h1M497 502h1M102 503h1M174 503h2M206 503h2M391 503h2M423 503h2M496 503h1M103 504h1M176 504h2M208 504h2M389 504h2M421 504h2M495 504h1M104 505h1M178 505h2M210 505h2M387 505h2M419 505h2M494 505h1M105 506h1M180 506h1M212 506h2M385 506h2M418 506h1M493 506h1M106 507h1M181 507h2M214 507h3M381 507h4M416 507h2M492 507h1M107 508h1M183 508h2M217 508h4M377 508h4M414 508h2M491 508h1M108 509h1M185 509h2M221 509h4M374 509h3M412 509h2M490 509h1M109 510h1M187 510h1M225 510h2M372 510h2M410 510h2M489 510h1M110 511h1M188 511h2M227 511h2M370 511h2M408 511h2M487 511h2M111 512h2M190 512h2M229 512h3M366 512h4M406 512h2M486 512h1M113 513h1M192 513h2M232 513h4M362 513h4M404 513h2M485 513h1M114 514h1M194 514h3M236 514h4M359 514h3M402 514h2M483 514h2M115 515h2M197 515h2M240 515h4M355 515h4M400 515h2M482 515h1M117 516h1M199 516h2M244 516h3M351 516h4M398 516h2M481 516h1M118 517h1M201 517h2M247 517h4M347 517h4M395 517h3M480 517h1M119 518h1M203 518h2M251 518h4M343 518h4M393 518h2M479 518h1M120 519h1M205 519h2M255 519h4M339 519h4M391 519h2M478 519h1M121 520h1M207 520h2M259 520h6M334 520h5M389 520h2M477 520h1M122 521h1M209 521h3M265 521h7M326 521h8M387 521h2M476 521h1M123 522h1M212 522h2M272 522h16M310 522h16M384 522h3M475 522h1M124 523h1M214 523h3M288 523h22M382 523h2M474 523h1M125 524h1M217 524h3M379 524h3M472 524h2M126 525h2M220 525h4M375 525h4M471 525h1M128 526h1M224 526h3M372 526h3M470 526h1M129 527h1M227 527h2M369 527h3M468 527h2M130 528h2M229 528h3M367 528h2M467 528h1M132 529h1M232 529h4M363 529h4M466 529h1M133 530h2M236 530h4M359 530h4M464 530h2M135 531h1M240 531h4M354 531h5M462 531h2M136 532h2M244 532h4M350 532h4M461 532h1M138 533h2M248 533h6M344 533h6M459 533h2M140 534h1M254 534h6M338 534h6M458 534h1M141 535h2M260 535h4M334 535h4M456 535h2M143 536h1M264 536h6M328 536h6M455 536h1M144 537h2M270 537h17M311 537h17M453 537h2M146 538h1M287 538h24M452 538h1M147 539h2M450 539h2M149 540h1M449 540h1M150 541h2M447 541h2M152 542h1M445 542h2M153 543h2M444 543h1M155 544h2M442 544h2M157 545h1M441 545h1M158 546h2M439 546h2M160 547h2M437 547h2M162 548h2M435 548h2M164 549h2M433 549h2M166 550h2M431 550h2M168 551h2M429 551h2M170 552h2M427 552h2M172 553h2M425 553h2M174 554h3M422 554h3M177 555h2M420 555h2M179 556h2M418 556h2M181 557h2M416 557h2M183 558h3M413 558h3M186 559h2M411 559h2M188 560h2M409 560h2M190 561h2M407 561h2M192 562h3M404 562h3M195 563h2M402 563h2M197 564h2M400 564h2M199 565h2M398 565h2M201 566h3M395 566h3M204 567h3M391 567h4M207 568h4M388 568h3M211 569h3M385 569h3M214 570h3M382 570h3M217 571h3M379 571h3M220 572h3M376 572h3M223 573h3M372 573h4M226 574h4M369 574h3M230 575h4M365 575h4M234 576h4M361 576h4M238 577h5M356 577h5M243 578h5M351 578h5M248 579h7M343 579h8M255 580h10M333 580h10M265 581h10M323 581h10M275 582h10M313 582h10M285 583h28"/>
<path stroke="#808080" d="M299 299h1M297 300h1M295 301h1M293 302h1M291 303h1M289 304h1M287 305h1M285 306h1M283 307h1M281 308h1M279 309h1M277 310h1M275 311h1M273 312h1M271 313h1M269 314h1M267 315h1M265 316h1M263 317h1M261 318h1M259 319h1M257 320h1M255 322h1M253 323h1M251 324h1M249 325h1M247 326h1M245 327h1M243 328h1M241 329h1M239 330h1M237 331h1M235 332h1M233 333h1M231 334h1M229 335h1M227 336h1M225 337h1M223 338h1M221 339h1M219 340h1M217 341h1M215 342h1M213 343h1M211 344h1M209 345h1M207 346h1M205 347h1M203 348h1M201 349h1M199 350h1M197 351h1M195 352h1M193 353h1M191 354h1M189 355h1M187 356h1M185 357h1M183 358h1M181 359h1M179 360h1M177 361h1M175 362h1M173 363h1M171 364h1M169 366h1M167 367h1M165 368h1M163 369h1M161 370h1M159 371h1M157 372h1M155 373h1M153 374h1M151 375h1M149 376h1M147 377h1M145 378h1M143 379h1M141 380h1M139 381h1M137 382h1M135 383h1M133 384h1M131 385h1M129 386h1M127 387h1"/>
<path stroke="#fff" d="M319 16h1M319 17h1M319 18h1M319 19h1M319 20h1M319 21h1M319 22h1M319 23h1M318 24h1M318 25h1M318 26h1M318 27h1M318 28h1M318 29h1M318 30h1M318 31h1M318 32h1M318 33h1M318 34h1M318 35h1M318 36h1M318 37h1M317 38h1M317 39h1M317 40h1M317 41h1M317 42h1M317 43h1M317 44h1M317 45h1M317 46h1M317 47h1M317 48h1M317 49h1M317 50h1M317 51h1M317 52h1M316 53h1M316 54h1M316 55h1M316 56h1M316 57h1M316 58h1M316 59h1M316 60h1M194 463h1M193 464h1M193 465h1M192 466h1M191 467h1M191 468h1M190 469h1M190 470h1M189 471h1M188 472h1M188 473h1M187 474h1M186 475h1M186 476h1M185 477h1M185 478h1M184 479h1M183 480h1M183 481h1M182 482h1M181 483h1M181 484h1M180 485h1M180 486h1M179 487h1"/>
<path stroke="#808080" d="M299 299h1M298 301h1M296 303h1M295 305h1M294 307h1M293 309h1M291 311h1M290 313h1M289 315h1M288 317h1M286 319h1M285 321h1M284 323h1M282 325h1M281 327h1M280 329h1M279 331h1M277 333h1M276 335h1M275 337h1M273 339h1M272 341h1M271 343h1M270 345h1M268 347h1M267 349h1M266 351h1M265 353h1M263 355h1M262 357h1M261 359h1M259 361h1M258 363h1M257 365h1M256 367h1M254 369h1M253 371h1M252 373h1M251 375h1M249 377h1M248 379h1M247 381h1M245 383h1M244 385h1M243 387h1M242 389h1M240 391h1M239 393h1M238 395h1M236 397h1M235 399h1M234 401h1M233 403h1M231 405h1M230 407h1M229 409h1M228 411h1M226 413h1M225 415h1M224 417h1M222 419h1M221 421h1M220 423h1M219 425h1M217 427h1M216 429h1M215 431h1M214 433h1M212 435h1M211 437h1M210 439h1M208 441h1M207 443h1M206 445h1M205 447h1M203 449h1M202 451h1M201 453h1M199 455h1M198 457h1M197 459h1M196 461h1"/>
<path stroke="#fff" d="M176 44h1M176 45h1M177 46h1M177 47h1M178 48h1M178 49h1M179 50h1M179 51h1M180 52h1M180 53h1M181 54h1M181 55h1M182 56h1M182 57h1M183 58h1M183 59h1M184 60h1M184 61h1M185 62h1M185 63h1M186 64h1M186 65h1M187 66h1M187 67h1M188 68h1M188 69h1M189 70h1M189 71h1M190 72h1M190 73h1M191 74h1M191 75h1M192 76h1M192 77h1M193 78h1M193 79h1M194 80h1M194 81h1M195 82h1M195 83h1M65 140h1M66 141h2M68 142h1M69 143h2M71 144h1M72 145h1M73 146h2M75 147h1M76 148h2M78 149h1M79 150h2M81 151h1M82 152h1M83 153h2M85 154h1M86 155h2M88 156h1M89 157h2M91 158h1M92 159h2M94 160h1M95 161h1M96 162h2M98 163h1M99 164h2M101 165h1M398 467h1M399 468h1M399 469h1M400 470h1M401 471h1M401 472h1M402 473h1M402 474h1M403 475h1M404 476h1M404 477h1M405 478h1M406 479h1M406 480h1M407 481h1M407 482h1M408 483h1M409 484h1M409 485h1M410 486h1M411 487h1M411 488h1M412 489h1M412 490h1M413 491h1M297 494h1M297 495h1M297 496h1M297 497h1M297 498h1M297 499h1M297 500h1M297 501h1M297 502h1M297 503h1M297 504h1M297 505h1M297 506h1M297 507h1M297 508h1M296 509h1M296 510h1M296 511h1M296 512h1M296 513h1M296 514h1M296 515h1M296 516h1M296 517h1M296 518h1M296 519h1M296 520h1M296 521h1M296 522h1M296 523h1"/>
<path stroke="#808080" d="M299 299h1M300 301h1M301 303h1M303 305h1M304 307h1M305 309h1M306 311h1M307 313h1M308 315h1M310 317h1M311 319h1M312 321h1M313 323h1M314 325h1M315 327h1M317 329h1M318 331h1M319 333h1M320 335h1M321 337h1M322 339h1M324 341h1M325 343h1M326 345h1M327 347h1M328 349h1M330 351h1M331 353h1M332 355h1M333 357h1M334 359h1M335 361h1M337 363h1M338 365h1M339 367h1M340 369h1M341 371h1M342 373h1M344 375h1M345 377h1M346 379h1M347 381h1M348 383h1M349 385h1M351 387h1M352 389h1M353 391h1M354 393h1M355 395h1M357 397h1M358 399h1M359 401h1M360 403h1M361 405h1M362 407h1M364 409h1M365 411h1M366 413h1M367 415h1M368 417h1M369 419h1M371 421h1M372 423h1M373 425h1M374 427h1M375 429h1M376 431h1M378 433h1M379 435h1M380 437h1M381 439h1M382 441h1M384 443h1M385 445h1M386 447h1M387 449h1M388 451h1M389 453h1M391 455h1M392 457h1M393 459h1M394 461h1M395 463h1M396 465h1"/>
<path stroke="#fff" d="M16 279h8M24 280h14M38 281h15M53 282h8M469 393h1M470 394h2M472 395h2M474 396h2M476 397h2M478 398h1M479 399h2M481 400h2M483 401h2M485 402h1M486 403h2M488 404h2M490 405h2M492 406h2M494 407h1"/>
<path stroke="#808080" d="M299 299h1M301 300h1M303 301h1M305 302h1M307 303h1M309 305h1M311 306h1M313 307h1M315 308h1M317 309h1M319 310h1M321 311h1M323 312h1M325 313h1M327 315h1M329 316h1M331 317h1M333 318h1M335 319h1M337 320h1M339 321h1M341 322h1M343 323h1M345 325h1M347 326h1M349 327h1M351 328h1M353 329h1M355 330h1M357 331h1M359 332h1M361 333h1M363 335h1M365 336h1M367 337h1M369 338h1M371 339h1M373 340h1M375 341h1M377 342h1M379 343h1M381 345h1M383 346h1M385 347h1M387 348h1M389 349h1M391 350h1M393 351h1M395 352h1M397 354h1M399 355h1M401 356h1M403 357h1M405 358h1M407 359h1M409 360h1M411 361h1M413 362h1M415 364h1M417 365h1M419 366h1M421 367h1M423 368h1M425 369h1M427 370h1M429 371h1M431 372h1M433 374h1M435 375h1M437 376h1M439 377h1M441 378h1M443 379h1M445 380h1M447 381h1M449 382h1M451 384h1M453 385h1M455 386h1M457 387h1M459 388h1M461 389h1M463 390h1M465 391h1M467 392h1"/>
<path stroke="#fff" d="M497 197h2M495 198h2M493 199h2M491 200h2M489 201h2M487 202h2M485 203h2M483 204h2M481 205h2M479 206h2M477 207h2M475 208h2M473 209h2M472 210h1M494 299h30M82 403h2M80 404h2M78 405h2M76 406h2M74 407h2M72 408h2M70 409h2M68 410h2M66 411h2M64 412h2M62 413h2M60 414h2M58 415h2M56 416h2M54 417h2M52 418h2M50 419h2M48 420h2M46 421h2M44 422h2M165 497h1M164 498h1M164 499h1M163 500h1M162 501h1M162 502h1M161 503h1M160 504h1M159 505h1M159 506h1M158 507h1M157 508h1M157 509h1M156 510h1M155 511h1M155 512h1M154 513h1M153 514h1M152 515h1M152 516h1M151 517h1M150 518h1M150 519h1M149 520h1M148 521h1M148 522h1M147 523h1M146 524h1M146 525h1M145 526h1M144 527h1M143 528h1M143 529h1M142 530h1M141 531h1M141 532h1M140 533h1"/>
<path stroke="#808080" d="M471 211h1M469 212h1M467 213h1M465 214h1M463 215h1M461 216h1M459 217h1M457 218h1M455 219h1M453 220h1M451 221h1M449 222h1M447 223h1M445 224h1M443 225h1M441 226h1M439 227h1M437 228h1M435 229h1M433 230h1M431 231h1M429 232h1M427 234h1M425 235h1M423 236h1M421 237h1M419 238h1M417 239h1M415 240h1M413 241h1M411 242h1M409 243h1M407 244h1M405 245h1M403 246h1M401 247h1M399 248h1M397 249h1M395 250h1M393 251h1M391 252h1M389 253h1M387 254h1M385 255h1M383 256h1M381 257h1M379 258h1M377 259h1M375 260h1M373 261h1M371 262h1M369 263h1M367 264h1M365 265h1M363 266h1M361 267h1M359 268h1M357 269h1M355 270h1M353 271h1M351 272h1M349 273h1M347 274h1M345 275h1M343 276h1M341 278h1M339 279h1M337 280h1M335 281h1M333 282h1M331 283h1M329 284h1M327 285h1M325 286h1M323 287h1M321 288h1M319 289h1M317 290h1M315 291h1M313 292h1M311 293h1M309 294h1M307 295h1M305 296h1M303 297h1M301 298h1M299 299h1"/>
<path stroke="#fff" d="M419 111h1M418 112h1M418 113h1M417 114h1M416 115h1M416 116h1M415 117h1M415 118h1M414 119h1M413 120h1M413 121h1M412 122h1M411 123h1M411 124h1M410 125h1M410 126h1M409 127h1M408 128h1M408 129h1M407 130h1M406 131h1M406 132h1M405 133h1M405 134h1M404 135h1M282 538h1M282 539h1M282 540h1M282 541h1M282 542h1M282 543h1M282 544h1M282 545h1M281 546h1M281 547h1M281 548h1M281 549h1M281 550h1M281 551h1M281 552h1M281 553h1M281 554h1M281 555h1M281 556h1M281 557h1M281 558h1M281 559h1M280 560h1M280 561h1M280 562h1M280 563h1M280 564h1M280 565h1M280 566h1M280 567h1M280 568h1M280 569h1M280 570h1M280 571h1M280 572h1M280 573h1M280 574h1M279 575h1M279 576h1M279 577h1M279 578h1M279 579h1M279 580h1M279 581h1M279 582h1"/>
<path stroke="#808080" d="M402 137h1M401 139h1M400 141h1M399 143h1M397 145h1M396 147h1M395 149h1M393 151h1M392 153h1M391 155h1M390 157h1M388 159h1M387 161h1M386 163h1M384 165h1M383 167h1M382 169h1M381 171h1M379 173h1M378 175h1M377 177h1M376 179h1M374 181h1M373 183h1M372 185h1M370 187h1M369 189h1M368 191h1M367 193h1M365 195h1M364 197h1M363 199h1M362 201h1M360 203h1M359 205h1M358 207h1M356 209h1M355 211h1M354 213h1M353 215h1M351 217h1M350 219h1M349 221h1M347 223h1M346 225h1M345 227h1M344 229h1M342 231h1M341 233h1M340 235h1M339 237h1M337 239h1M336 241h1M335 243h1M333 245h1M332 247h1M331 249h1M330 251h1M328 253h1M327 255h1M326 257h1M325 259h1M323 261h1M322 263h1M321 265h1M319 267h1M318 269h1M317 271h1M316 273h1M314 275h1M313 277h1M312 279h1M310 281h1M309 283h1M308 285h1M307 287h1M305 289h1M304 291h1M303 293h1M302 295h1M300 297h1M299 299h1"/>
<path stroke="#fff" d="M302 75h1M302 76h1M302 77h1M302 78h1M302 79h1M302 80h1M302 81h1M302 82h1M302 83h1M302 84h1M302 85h1M302 86h1M302 87h1M302 88h1M302 89h1M301 90h1M301 91h1M301 92h1M301 93h1M301 94h1M301 95h1M301 96h1M301 97h1M301 98h1M301 99h1M301 100h1M301 101h1M301 102h1M301 103h1M301 104h1M185 107h1M186 108h1M186 109h1M187 110h1M188 111h1M188 112h1M189 113h1M189 114h1M190 115h1M191 116h1M191 117h1M192 118h1M193 119h1M193 120h1M194 121h1M194 122h1M195 123h1M196 124h1M196 125h1M197 126h1M198 127h1M198 128h1M199 129h1M199 130h1M200 131h1M497 433h1M498 434h2M500 435h1M501 436h2M503 437h1M504 438h1M505 439h2M507 440h1M508 441h2M510 442h1M511 443h2M513 444h1M514 445h1M515 446h2M517 447h1M518 448h2M520 449h1M521 450h2M523 451h1M524 452h2M526 453h1M527 454h1M528 455h2M530 456h1M531 457h2M533 458h1M403 515h1M403 516h1M404 517h1M404 518h1M405 519h1M405 520h1M406 521h1M406 522h1M407 523h1M407 524h1M408 525h1M408 526h1M409 527h1M409 528h1M410 529h1M410 530h1M411 531h1M411 532h1M412 533h1M412 534h1M413 535h1M413 536h1M414 537h1M414 538h1M415 539h1M415 540h1M416 541h1M416 542h1M417 543h1M417 544h1M418 545h1M418 546h1M419 547h1M419 548h1M420 549h1M420 550h1M421 551h1M421 552h1M422 553h1M422 554h1"/>
<path stroke="#808080" d="M202 133h1M203 135h1M204 137h1M205 139h1M206 141h1M207 143h1M209 145h1M210 147h1M211 149h1M212 151h1M213 153h1M214 155h1M216 157h1M217 159h1M218 161h1M219 163h1M220 165h1M222 167h1M223 169h1M224 171h1M225 173h1M226 175h1M227 177h1M229 179h1M230 181h1M231 183h1M232 185h1M233 187h1M234 189h1M236 191h1M237 193h1M238 195h1M239 197h1M240 199h1M241 201h1M243 203h1M244 205h1M245 207h1M246 209h1M247 211h1M249 213h1M250 215h1M251 217h1M252 219h1M253 221h1M254 223h1M256 225h1M257 227h1M258 229h1M259 231h1M260 233h1M261 235h1M263 237h1M264 239h1M265 241h1M266 243h1M267 245h1M268 247h1M270 249h1M271 251h1M272 253h1M273 255h1M274 257h1M276 259h1M277 261h1M278 263h1M279 265h1M280 267h1M281 269h1M283 271h1M284 273h1M285 275h1M286 277h1M287 279h1M288 281h1M290 283h1M291 285h1M292 287h1M293 289h1M294 291h1M295 293h1M297 295h1M298 297h1M299 299h1"/>
<path stroke="#fff" d="M104 191h1M105 192h2M107 193h2M109 194h2M111 195h2M113 196h1M114 197h2M116 198h2M118 199h2M120 200h1M121 201h2M123 202h2M125 203h2M127 204h2M129 205h1M538 316h8M546 317h14M560 318h15M575 319h8"/>
<path stroke="#808080" d="M131 206h1M133 207h1M135 208h1M137 209h1M139 210h1M141 211h1M143 212h1M145 213h1M147 214h1M149 216h1M151 217h1M153 218h1M155 219h1M157 220h1M159 221h1M161 222h1M163 223h1M165 224h1M167 226h1M169 227h1M171 228h1M173 229h1M175 230h1M177 231h1M179 232h1M181 233h1M183 234h1M185 236h1M187 237h1M189 238h1M191 239h1M193 240h1M195 241h1M197 242h1M199 243h1M201 244h1M203 246h1M205 247h1M207 248h1M209 249h1M211 250h1M213 251h1M215 252h1M217 253h1M219 255h1M221 256h1M223 257h1M225 258h1M227 259h1M229 260h1M231 261h1M233 262h1M235 263h1M237 265h1M239 266h1M241 267h1M243 268h1M245 269h1M247 270h1M249 271h1M251 272h1M253 273h1M255 275h1M257 276h1M259 277h1M261 278h1M263 279h1M265 280h1M267 281h1M269 282h1M271 283h1M273 285h1M275 286h1M277 287h1M279 288h1M281 289h1M283 290h1M285 291h1M287 292h1M289 293h1M291 295h1M293 296h1M295 297h1M297 298h1M299 299h1"/>
<path stroke="#ff0000" d="M491 119h3M501 119h3M490 120h1M494 120h1M500 120h1M504 120h1M489 121h1M495 121h1M499 121h1M505 121h1M489 122h1M495 122h1M499 122h1M505 122h1M489 123h1M495 123h1M499 123h1M505 123h1M490 124h1M496 124h1M498 124h1M504 124h1M491 125h1M496 125h1M498 125h1M503 125h1M496 126h1M498 126h1M496 127h1M498 127h1M497 128h1M497 129h1M497 130h1M497 131h1M497 132h1M497 133h1M497 134h1M497 135h1"/>
<path stroke="#ffff00" d="M379 43h1M391 43h1M380 44h1M390 44h1M380 45h1M390 45h1M381 46h2M388 46h2M383 47h5M381 48h2M388 48h2M380 49h1M390 49h1M380 50h1M390 50h1M379 51h1M391 51h1M379 52h1M391 52h1M379 53h1M391 53h1M379 54h1M391 54h1M379 55h1M391 55h1M380 56h1M390 56h1M380 57h1M390 57h1M381 58h2M388 58h2M383 59h5"/>
<path stroke="#00ff00" d="M244 33h1M258 33h1M245 34h1M257 34h1M246 35h11M248 36h1M254 36h1M248 37h1M254 37h1M248 38h1M254 38h1M248 39h1M254 39h1M248 40h1M254 40h1M248 41h1M254 41h1M248 42h1M254 42h1M248 43h1M254 43h1M248 44h1M254 44h1M248 45h1M254 45h1M248 46h1M254 46h1M246 47h11M245 48h1M257 48h1M244 49h1M258 49h1"/>
<path stroke="#0000ff" d="M125 94h5M122 95h3M130 95h1M121 96h1M131 96h3M120 97h1M130 97h1M134 97h1M119 98h1M129 98h1M135 98h1M129 99h1M135 99h1M121 100h3M129 100h1M135 100h1M120 101h1M124 101h1M130 101h1M134 101h1M119 102h1M125 102h1M131 102h3M119 103h1M125 103h1M119 104h1M125 104h1M135 104h1M120 105h1M124 105h1M134 105h1M121 106h3M133 106h1M124 107h1M130 107h3M125 108h5"/>
<path stroke="#ff0000" d="M49 205h5M48 206h1M54 206h1M47 207h1M55 207h1M46 208h1M56 208h1M45 209h1M57 209h1M45 210h1M57 210h1M45 211h1M57 211h1M45 212h1M57 212h1M45 213h1M57 213h1M46 214h1M56 214h1M47 215h1M55 215h1M47 216h1M55 216h1M43 217h1M47 217h1M55 217h1M44 218h1M46 218h1M56 218h1M45 219h1M57 219h1M58 220h1M59 221h1"/>
<path stroke="#ffff00" d="M33 340h1M37 340h1M41 340h1M34 341h1M36 341h1M38 341h1M40 341h1M42 341h1M35 342h1M39 342h1M43 342h1M47 342h1M35 343h1M39 343h1M43 343h1M46 343h2M35 344h1M39 344h1M43 344h1M45 344h1M47 344h1M35 345h1M39 345h1M43 345h2M47 345h1M35 346h1M39 346h1M43 346h1M47 346h1M35 347h1M39 347h1M43 347h1M47 347h1M35 348h1M39 348h1M43 348h1M47 348h1M35 349h1M39 349h1M43 349h1M47 349h1M35 350h1M39 350h1M43 350h1M47 350h1M35 351h1M39 351h1M43 351h1M47 351h1M35 352h1M39 352h1M43 352h1M47 352h1M35 353h1M39 353h1M44 353h1M46 353h1M35 354h1M39 354h1M45 354h1M44 355h1M46 355h1M43 356h1M47 356h1"/>
<path stroke="#00ff00" d="M99 467h5M98 468h1M104 468h1M97 469h1M105 469h1M97 470h1M105 470h1M97 471h1M105 471h1M98 472h1M104 472h1M93 473h7M103 473h7M93 477h17"/>
<path stroke="#0000ff" d="M205 539h1M209 539h1M213 539h1M206 540h1M208 540h1M210 540h1M212 540h1M214 540h1M207 541h1M211 541h1M215 541h1M207 542h1M211 542h1M215 542h1M207 543h1M211 543h1M215 543h1M207 544h1M211 544h1M215 544h1M207 545h1M211 545h1M215 545h1M207 546h1M211 546h1M215 546h1M207 547h1M211 547h1M215 547h1M207 548h1M211 548h1M215 548h1M207 549h1M211 549h1M215 549h1M207 550h1M211 550h1M215 550h1M220 550h1M207 551h1M211 551h1M215 551h1M219 551h3M207 552h1M211 552h1M215 552h1M220 552h1M207 553h1M211 553h1M215 553h1M220 553h1M216 554h1M219 554h1M217 555h2"/>
<path stroke="#ff0000" d="M352 549h5M355 550h2M354 551h1M356 551h1M353 552h1M356 552h1M352 553h1M356 553h1M351 554h1M342 555h1M350 555h1M343 556h1M349 556h1M344 557h1M348 557h1M345 558h1M347 558h1M346 559h1M345 560h1M347 560h1M344 561h1M348 561h1M343 562h1M349 562h1M342 563h1M350 563h1M341 564h1M340 565h1"/>
<path stroke="#ffff00" d="M465 489h1M471 489h1M475 489h3M464 490h2M471 490h1M474 490h1M478 490h1M463 491h1M465 491h1M471 491h1M473 491h1M479 491h1M465 492h1M470 492h1M472 492h1M479 492h1M465 493h1M469 493h1M473 493h1M479 493h1M465 494h1M469 494h1M474 494h1M478 494h1M465 495h1M469 495h1M475 495h3M465 496h1M469 496h1M476 496h1M465 497h1M469 497h1M477 497h1M466 498h1M468 498h1M478 498h1M467 499h1M479 499h1M467 500h1M479 500h1M467 501h1M479 501h1M467 502h1M479 502h1M467 503h1M479 503h1M478 504h1M477 505h1"/>
<path stroke="#00ff00" d="M543 377h1M549 377h1M555 377h1M542 378h2M548 378h2M554 378h1M542 379h1M544 379h1M548 379h1M550 379h1M554 379h1M541 380h1M544 380h1M547 380h1M550 380h1M553 380h1M540 381h1M544 381h1M546 381h1M550 381h1M552 381h1M540 382h1M545 382h2M551 382h2M539 383h1M545 383h1M551 383h1M543 387h1M549 387h1M555 387h1M542 388h2M548 388h2M554 388h1M542 389h1M544 389h1M548 389h1M550 389h1M554 389h1M541 390h1M544 390h1M547 390h1M550 390h1M553 390h1M540 391h1M544 391h1M546 391h1M550 391h1M552 391h1M540 392h1M545 392h2M551 392h2M539 393h1M545 393h1M551 393h1"/>
<path stroke="#0000ff" d="M549 242h1M565 242h1M550 243h1M564 243h1M551 244h1M563 244h1M552 245h1M562 245h1M552 246h1M562 246h1M553 247h1M561 247h1M553 248h1M561 248h1M553 249h1M561 249h1M549 250h17M553 251h1M561 251h1M553 252h1M561 252h1M553 253h1M561 253h1M552 254h1M562 254h1M552 255h1M562 255h1M551 256h1M563 256h1M550 257h1M564 257h1M549 258h1M565 258h1"/>
<path stroke="#fff" d="M301 131h1M301 132h1M301 133h1M301 134h1M301 135h1M301 136h1M301 137h1M301 138h1M301 139h1M301 140h1M301 141h1M301 142h1M301 143h1"/>
<path stroke="#ffff00" d="M301 149h1"/>
<path stroke="#fff" d="M131 299h13"/>
<path stroke="#ff0000" d="M149 299h1"/>
<path stroke="#808080" d="M143 239h2M145 240h3M148 241h2M150 242h3M153 243h2"/>
<path stroke="#008080" d="M129 227h5M128 228h1M134 228h1M127 229h1M135 229h1M126 230h1M136 230h1M125 231h1M137 231h1M125 232h1M137 232h1M125 233h1M137 233h1M125 234h1M137 234h1M125 235h1M137 235h1M126 236h1M136 236h1M127 237h1M135 237h1M127 238h1M135 238h1M125 239h3M135 239h3M124 240h1M127 240h1M135 240h1M138 240h1M123 241h1M127 241h1M135 241h1M139 241h1M124 242h1M126 242h1M136 242h1M138 242h1M125 243h1M137 243h1M159 246h1"/>
<path stroke="#fff" d="M199 418h1M198 419h1M197 420h1M196 421h1M195 422h1M195 423h1M194 424h1M193 425h1M192 426h1M191 427h1"/>
<path stroke="#0000ff" d="M203 413h1M177 428h1M182 428h3M189 428h1M177 429h1M181 429h1M185 429h1M189 429h1M177 430h1M181 430h1M185 430h1M189 430h1M177 431h1M181 431h1M185 431h1M189 431h1M177 432h1M182 432h3M189 432h1M178 433h1M188 433h1M178 434h1M188 434h1M179 435h2M186 435h2M181 436h5M183 437h1M183 438h1M183 439h1M179 440h9M183 441h1M183 442h1M183 443h1M183 444h1"/>
<path stroke="#fff" d="M348 447h1M348 448h1M348 449h1M348 450h1M347 451h1M347 452h1M347 453h1M347 454h1M347 455h1M347 456h1M346 457h1M346 458h1M346 459h1M346 460h1"/>
<path stroke="#0000ff" d="M346 441h1M343 464h1M349 464h1M355 464h1M343 465h1M349 465h1M355 465h1M342 466h3M347 466h5M354 466h3M343 467h1M349 467h1M355 467h1M343 468h1M349 468h1M355 468h1M344 469h1M349 469h1M354 469h1M344 470h1M349 470h1M354 470h1M345 471h2M349 471h1M352 471h2M347 472h5M349 473h1M349 474h1M349 475h1M345 476h9M349 477h1M349 478h1M349 479h1M349 480h1"/>
<path stroke="#fff" d="M282 454h1M282 455h1M282 456h1M282 457h1M282 458h1M282 459h1M281 460h1M281 461h1M281 462h1M281 463h1M281 464h1M281 465h1M281 466h1"/>
<path stroke="#00ff00" d="M283 448h1M274 470h1M286 470h1M275 471h1M285 471h1M276 472h1M284 472h1M276 473h1M284 473h1M276 474h1M280 474h1M284 474h1M276 475h1M280 475h1M284 475h1M276 476h9M276 477h1M280 477h1M284 477h1M276 478h1M280 478h1M284 478h1M275 479h1M280 479h1M285 479h1M274 480h1M280 480h1M286 480h1M280 481h1M279 482h3M278 483h1M282 483h1M278 484h1M282 484h1M278 485h1M282 485h1M279 486h3"/>
<path stroke="#fff" d="M171 388h1M170 389h1M170 390h1M169 391h1M169 392h1M168 393h1M168 394h1M167 395h1M167 396h1M166 397h1M166 398h1M165 399h1"/>
<path stroke="#ffff00" d="M176 385h1M153 398h1M153 399h1M149 400h9M153 401h1M153 402h1M153 403h1M153 404h1M157 404h3M153 405h1M156 405h1M160 405h1M153 406h3M161 406h1M153 407h1M161 407h1M153 408h1M161 408h1M153 409h1M160 409h1M153 410h1M159 410h1M153 411h1M159 411h1M153 412h1M159 412h1M160 413h1M161 414h1"/>
<path stroke="#fff" d="M155 385h4M159 386h8M167 387h5"/>
<path stroke="#ff0000" d="M151 383h1M150 384h1M176 384h1M140 385h2M149 385h1M142 386h1M149 386h1M143 387h1M149 387h1M143 388h1M149 388h1M143 389h1M149 389h1M142 390h1M149 390h1M142 391h1M149 391h1M141 392h1M149 392h1M141 393h1M149 393h1M140 394h1M149 394h1M140 395h1M149 395h1M139 396h1M149 396h1M139 397h15M149 398h1M149 399h1"/>
<path stroke="#fff" d="M416 402h1M417 403h1M418 404h1M419 405h1M420 406h2M422 407h1M423 408h1M424 409h1M425 410h1"/>
<path stroke="#ff0000" d="M411 398h1M437 410h6M441 411h2M440 412h1M442 412h1M439 413h1M442 413h1M438 414h1M442 414h1M437 415h1M442 415h1M429 416h5M436 416h1M428 417h1M434 417h2M427 418h1M435 418h1M426 419h1M436 419h1M426 420h1M436 420h1M426 421h1M436 421h1M426 422h1M436 422h1M426 423h1M436 423h1M427 424h1M435 424h1M428 425h1M434 425h1M429 426h5"/>
<path stroke="#fff" d="M299 455h1M299 456h1M299 457h1M299 458h1M299 459h1M299 460h1M299 461h1M299 462h1M299 463h1M299 464h1M299 465h1M299 466h1M299 467h1"/>
<path stroke="#00ff00" d="M299 449h1M297 471h5M296 472h1M302 472h1M295 473h1M303 473h1M295 474h1M303 474h1M295 475h1M303 475h1M295 476h1M303 476h1M295 477h1M303 477h1M296 478h1M302 478h1M297 479h5M299 480h1M299 481h1M299 482h1M295 483h9M299 484h1M299 485h1M299 486h1M299 487h1"/>
<path stroke="#fff" d="M352 445h1M353 446h1M354 447h1M355 448h1M356 449h1M357 450h2M359 451h1M360 452h1M361 453h1M362 454h1"/>
<path stroke="#00ff00" d="M350 439h1M363 457h1M371 457h1M364 458h1M370 458h1M365 459h5M364 460h1M370 460h1M363 461h1M371 461h1M363 462h1M371 462h1M363 463h1M371 463h1M363 464h1M371 464h1M363 465h1M371 465h1M364 466h1M370 466h1M365 467h5M367 468h1M367 469h1M367 470h1M363 471h9M367 472h1M367 473h1"/>
<path stroke="#fff" d="M233 145h1M233 146h1M234 147h1M234 148h1M234 149h1M235 150h1M235 151h1M236 152h1M236 153h1M236 154h1M237 155h1M237 156h1"/>
<path stroke="#0000ff" d="M224 126h5M223 127h1M229 127h2M222 128h1M231 128h1M223 129h1M232 129h1M224 130h1M233 130h1M225 131h1M233 131h1M225 132h1M234 132h1M226 133h1M234 133h1M226 134h1M234 134h1M226 135h1M234 135h1M225 136h1M234 136h1M225 137h1M233 137h1M224 138h1M233 138h1M223 139h1M232 139h1M222 140h1M231 140h1M223 141h1M229 141h2M224 142h5M240 162h1"/>
<path stroke="#fff" d="M366 439h1M367 440h2M369 441h1M370 442h2M372 443h1M373 444h2M375 445h1M376 446h2M378 447h1"/>
<path stroke="#ff0000" d="M301 155h1M300 156h1M299 157h1M298 158h1M297 159h1M296 160h1M295 161h1M294 162h1M293 163h1M292 164h1M291 165h1M290 166h1M289 167h1M288 168h1M287 169h1M286 170h1M285 171h1M284 172h1M283 173h1M282 174h1M281 175h1M280 176h1M279 177h1M278 178h1M277 179h1M276 180h1M275 181h1M274 182h1M273 183h1M272 184h1M271 185h1M270 186h1M269 187h1M268 188h1M267 189h1M266 190h1M264 191h2M263 192h1M262 193h1M261 194h1M260 195h1M259 196h1M258 197h1M257 198h1M256 199h1M255 200h1M254 201h1M253 202h1M252 203h1M251 204h1M250 205h1M249 206h1M248 207h1M247 208h1M246 209h1M245 210h1M244 211h1M243 212h1M242 213h1M241 214h1M240 215h1M239 216h1M238 217h1M237 218h1M236 219h1M235 220h1M234 221h1M233 222h1M232 223h1M231 224h1M230 225h1M229 226h1M228 227h1M227 228h1M226 229h1M225 230h1M224 231h1M223 232h1M222 233h1M221 234h1M220 235h1M219 236h1M218 237h1M217 238h1M216 239h1M215 240h1M214 241h1M213 242h1M212 243h1M211 244h1M210 245h1M209 246h1M208 247h1M207 248h1M206 249h1M205 250h1M204 251h1M203 252h1M202 253h1M201 254h1M200 255h1M199 256h1M198 257h1M197 258h1M196 259h1M195 260h1M194 261h1M193 262h1M191 263h2M190 264h1M189 265h1M188 266h1M187 267h1M186 268h1M185 269h1M184 270h1M183 271h1M182 272h1M181 273h1M180 274h1M179 275h1M178 276h1M177 277h1M176 278h1M175 279h1M174 280h1M173 281h1M172 282h1M171 283h1M170 284h1M169 285h1M168 286h1M167 287h1M166 288h1M165 289h1M164 290h1M163 291h1M162 292h1M161 293h1M160 294h1M159 295h1M158 296h1M157 297h1M156 298h1M155 299h1M364 434h1M382 449h5M380 450h2M387 450h2M379 451h1M389 451h1M378 452h1M390 452h1M377 453h1M391 453h1M377 454h1M391 454h1M376 455h1M392 455h1M376 456h1M392 456h1M376 457h1M384 457h1M392 457h1M376 458h1M392 458h1M376 459h1M392 459h1M377 460h1M391 460h1M377 461h1M391 461h1M378 462h1M390 462h1M379 463h1M389 463h1M380 464h2M387 464h2M382 465h5"/>
<path stroke="#00ff00" d="M301 155h1M300 156h1M299 158h1M299 159h1M298 161h1M297 162h1M296 164h1M296 165h1M295 167h1M294 168h1M293 170h1M293 171h1M291 173h1M291 174h1M290 176h1M289 177h1M288 179h1M288 180h1M287 182h1M286 183h1M285 185h1M285 186h1M283 188h1M283 189h1M282 191h1M281 192h1M280 194h1M280 195h1M279 197h1M278 198h1M277 200h1M277 201h1M275 203h1M275 204h1M274 206h1M273 207h1M272 209h1M272 210h1M271 212h1M270 213h1M269 215h1M269 216h1M267 218h1M267 219h1M266 221h1M265 222h1M264 224h1M264 225h1M263 227h1M262 228h1M261 230h1M261 231h1M259 233h1M259 234h1M258 236h1M257 237h1M256 239h1M256 240h1M255 242h1M254 243h1M253 245h1M253 246h1M251 248h1M251 249h1M250 251h1M249 252h1M248 254h1M248 255h1M247 257h1M246 258h1M245 260h1M245 261h1M243 263h1M243 264h1M242 266h1M242 267h1M240 269h1M240 270h1M239 272h1M238 273h1M237 275h1M237 276h1M235 278h1M235 279h1M234 281h1M234 282h1M232 284h1M232 285h1M231 287h1M230 288h1M229 290h1M229 291h1M227 293h1M227 294h1M226 296h1M226 297h1M224 299h1M224 300h1M223 302h1M222 303h1M221 305h1M221 306h1M219 308h1M219 309h1M218 311h1M218 312h1M216 314h1M216 315h1M215 317h1M214 318h1M213 320h1M213 321h1M211 323h1M211 324h1M210 326h1M210 327h1M208 329h1M208 330h1M207 332h1M206 333h1M205 335h1M205 336h1M203 338h1M203 339h1M202 341h1M202 342h1M200 344h1M200 345h1M199 347h1M199 348h1M197 350h1M197 351h1M195 353h1M195 354h1M194 356h1M194 357h1M192 359h1M192 360h1M191 362h1M191 363h1M189 365h1M189 366h1M187 368h1M187 369h1M186 371h1M186 372h1M184 374h1M184 375h1M183 377h1M183 378h1M181 380h1M181 381h1"/>
<path stroke="#ff0000" d="M155 299h1M156 300h1M157 301h1M158 302h1M159 303h1M160 304h1M161 305h1M161 306h2M163 307h1M164 308h1M165 309h1M165 310h2M167 311h1M168 312h1M169 313h1M169 314h2M171 315h1M172 316h1M173 317h1M172 318h1M174 318h1M175 319h1M176 320h1M177 321h1M176 322h1M178 322h1M179 323h1M180 324h1M181 325h1M179 326h1M182 326h1M183 327h1M184 328h1M185 329h1M183 330h1M186 330h1M187 331h1M188 332h1M189 333h1M187 334h1M190 334h1M191 335h1M192 336h1M193 337h1M190 338h1M194 338h1M195 339h1M196 340h1M197 341h1M194 342h1M198 342h1M199 343h1M200 344h1M201 345h1M197 346h1M202 346h1M203 347h1M204 348h1M205 349h1M201 350h1M206 350h1M207 351h1M208 352h1M209 353h1M205 354h1M210 354h1M211 355h1M212 356h1M213 357h1M208 358h1M214 358h1M215 359h1M216 360h1M217 361h1M212 362h1M218 362h1M219 363h1M220 364h1M221 365h1M215 366h1M222 366h1M223 367h1M224 368h1M225 369h1M219 370h1M226 370h1M227 371h1M228 372h1M229 373h1M223 374h1M230 374h1M231 375h1M232 376h1M233 377h1M226 378h1M234 378h1M235 379h1M236 380h1M237 381h1M230 382h1M238 382h1M239 383h1M240 384h1M241 385h1M233 386h1M242 386h1M243 387h1M244 388h1M245 389h1M237 390h1M246 390h1M247 391h1M248 392h1M249 393h1M241 394h1M250 394h1M251 395h1M252 396h1M253 397h1M244 398h1M254 398h1M255 399h1M256 400h1M257 401h1M248 402h1M258 402h1M259 403h1M260 404h1M261 405h1M252 406h1M262 406h1M263 407h1M264 408h1M265 409h1M255 410h1M266 410h1M267 411h1M268 412h1M269 413h1M259 414h1M270 414h1M271 415h1M272 416h1M273 417h1M262 418h1M274 418h1M275 419h1M276 420h1M277 421h1M266 422h1M278 422h1M279 423h1M280 424h1M281 425h1M270 426h1M282 426h1M283 427h1M284 428h1M285 429h1M273 430h1M286 430h1M287 431h1M288 432h1M289 433h1M277 434h1M290 434h1M291 435h1M292 436h1M293 437h1M280 438h1M294 438h1M295 439h1M296 440h1M297 441h1M284 442h1M298 442h1M299 443h1"/>
<path stroke="#00ff00" d="M157 300h1M160 302h1M163 304h1M166 306h1M169 308h1M172 310h1M175 312h1M178 313h1M181 315h1M184 317h1M187 319h1M190 321h1M193 323h1M196 325h1M199 327h1M202 328h1M205 330h1M208 332h1M211 334h1M214 336h1M217 338h1M220 340h1M223 342h1M226 343h1M229 345h1M232 347h1M235 349h1M238 351h1M241 353h1M244 355h1M247 357h1M250 358h1M253 360h1M256 362h1M259 364h1M262 366h1M265 368h1M268 370h1M271 372h1M274 374h1M277 375h1M280 377h1M283 379h1M286 381h1M289 383h1M292 385h1M295 387h1M298 389h1M301 390h1M304 392h1M307 394h1M310 396h1M313 398h1M316 400h1M319 402h1M322 404h1M325 405h1M328 407h1M331 409h1M334 411h1M337 413h1M340 415h1M343 417h1M346 419h1M349 420h1M352 422h1M355 424h1M358 426h1M361 428h1"/>
<path stroke="#00ffff" d="M207 409h3M210 410h5M215 411h6M221 412h5M226 413h5M231 414h5M236 415h6M242 416h5M247 417h5M252 418h6M258 419h5M263 420h5M268 421h5M273 422h6M279 423h5M284 424h5M289 425h5M294 426h6M300 427h5M305 428h5M310 429h6M316 430h5M321 431h5M326 432h5M331 433h6M337 434h5M342 435h3"/>
<path stroke="#ff0000" d="M401 394h7M387 395h14M374 396h13M361 397h13M347 398h14M334 399h13M321 400h13M307 401h14M294 402h13M281 403h13M267 404h14M254 405h13M241 406h13M227 407h14M214 408h13M207 409h7"/>
<path stroke="#00ffff" d="M207 409h3M210 410h6M216 411h6M222 412h5M227 413h6M233 414h6M239 415h5M244 416h6M250 417h5M255 418h6M261 419h6M267 420h5M272 421h6M278 422h6M284 423h5M289 424h6M295 425h6M301 426h5M306 427h6M312 428h5M317 429h6M323 430h6M329 431h5M334 432h6M340 433h6M346 434h3"/>
<path stroke="#00ff00" d="M242 167h1M242 169h1M241 171h1M241 173h1M241 175h1M241 177h1M240 179h1M240 181h1M240 183h1M239 185h1M239 187h1M239 189h1M239 191h1M238 193h1M238 195h1M238 197h1M237 199h1M237 201h1M237 203h1M237 205h1M236 207h1M236 209h1M236 211h1M235 213h1M235 215h1M235 217h1M234 219h1M234 221h1M234 223h1M234 225h1M233 227h1M233 229h1M233 231h1M232 233h1M232 235h1M232 237h1M232 239h1M231 241h1M231 243h1M231 245h1M230 247h1M230 249h1M230 251h1M230 253h1M229 255h1M229 257h1M229 259h1M228 261h1M228 263h1M228 265h1M228 267h1M227 269h1M227 271h1M227 273h1M226 275h1M226 277h1M226 279h1M226 281h1M225 283h1M225 285h1M225 287h1M224 289h1M224 291h1M224 293h1M223 295h1M223 297h1M223 299h1M223 301h1M222 303h1M222 305h1M222 307h1M221 309h1M221 311h1M221 313h1M221 315h1M220 317h1M220 319h1M220 321h1M219 323h1M219 325h1M219 327h1M219 329h1M218 331h1M218 333h1M218 335h1M217 337h1M217 339h1M217 341h1M217 343h1M216 345h1M216 347h1M216 349h1M215 351h1M215 353h1M215 355h1M215 357h1M214 359h1M214 361h1M214 363h1M213 365h1M213 367h1M213 369h1M212 371h1M212 373h1M212 375h1M212 377h1M211 379h1M211 381h1M211 383h1M210 385h1M210 387h1M210 389h1M210 391h1M209 393h1M209 395h1M209 397h1M208 399h1M208 401h1M208 403h1M208 405h1M207 407h1M207 409h1"/>
<path stroke="#00ffff" d="M208 409h1M211 409h1M214 410h1M217 410h1M220 411h1M223 411h1M226 411h1M229 412h1M232 412h1M235 412h1M238 413h1M241 413h1M244 414h1M247 414h1M250 414h1M253 415h1M256 415h1M259 415h1M262 416h1M265 416h1M268 417h1M271 417h1M274 417h1M277 418h1M280 418h1M283 418h1M286 419h1M289 419h1M292 419h1M295 420h1M298 420h1M301 421h1M304 421h1M307 421h1M310 422h1M313 422h1M316 422h1M319 423h1M322 423h1M325 424h1M328 424h1M331 424h1M334 425h1M337 425h1M340 425h1M343 426h1M346 426h1M349 427h1M352 427h1M355 427h1M358 428h1M361 428h1"/>
<path stroke="#ffff00" d="M346 434h3M344 435h2"/>
<path stroke="#0000ff" d="M242 167h1M243 170h1M244 173h1M245 176h1M247 179h1M248 182h1M249 185h1M250 188h1M251 191h1M252 194h1M253 197h1M255 200h1M256 203h1M257 206h1M258 209h1M259 212h1M260 215h1M261 218h1M263 221h1M264 224h1M265 227h1M266 230h1M267 233h1M268 236h1M269 239h1M271 242h1M272 245h1M273 248h1M274 251h1M275 254h1M276 257h1M277 260h1M279 263h1M280 266h1M281 269h1M282 272h1M283 275h1M284 278h1M285 281h1M287 284h1M288 287h1M289 290h1M290 293h1M291 296h1M292 299h1M293 302h1M295 305h1M296 308h1M297 311h1M298 314h1M299 317h1M300 320h1M301 323h1M303 326h1M304 329h1M305 332h1M306 335h1M307 338h1M308 341h1M309 344h1M311 347h1M312 350h1M313 353h1M314 356h1M315 359h1M316 362h1M317 365h1M319 368h1M320 371h1M321 374h1M322 377h1M323 380h1M324 383h1M325 386h1M326 389h1M328 392h1M329 395h1M330 398h1M331 401h1M332 404h1M333 407h1M334 410h1M336 413h1M337 416h1M338 419h1M339 422h1M340 425h1M341 428h1M342 431h1M344 434h1"/>
<path stroke="#ffff00" d="M361 428h1M357 430h1M353 431h1M349 433h1M345 435h1"/>
<path stroke="#00ffff" d="M407 394h1M404 395h1M401 396h1M398 398h1M395 399h1M392 400h1M389 401h1M386 402h1M383 403h1M380 405h1M377 406h1M374 407h1M371 408h1M368 409h1M365 410h1M362 412h1M359 413h1M356 414h1M353 415h1M350 416h1M347 417h1M344 419h1M341 420h1M338 421h1M335 422h1M332 423h1M329 424h1M326 426h1M323 427h1M320 428h1M317 429h1M314 430h1M311 431h1M308 433h1M305 434h1M302 435h1M299 436h1M296 437h1M293 438h1M290 440h1M287 441h1M284 442h1"/>
<path stroke="#ffff00" d="M181 380h1M181 381h1M287 442h1M291 442h1M295 443h1M299 443h1"/>
<path stroke="#00ffff" d="M182 381h1M182 382h1M185 382h1M185 383h1M188 384h1M188 385h1M191 385h1M191 386h1M194 387h1M194 388h1M197 389h1M200 390h1M200 391h1M203 392h1M203 393h1M206 393h1M206 394h1M209 395h1M209 396h1M212 397h1M215 398h1M215 399h1M218 400h1M221 401h1M221 402h1M224 403h1M224 404h1M227 405h1M230 406h1M230 407h1M233 408h1M236 409h1M236 410h1M239 411h1M242 413h1M245 414h1M245 415h1M248 416h1M251 417h1M251 418h1M254 419h1M257 421h1M260 422h1M260 423h1M263 424h1M266 425h1M266 426h1M269 427h1M272 429h1M275 430h1M278 432h1M281 433h1M281 434h1M284 435h1M287 437h1M290 438h1M293 440h1M296 441h1M299 443h1"/>
<path stroke="#0000ff" d="M242 167h1M243 169h1M244 171h1M244 173h1M245 175h1M246 177h1M247 179h1M248 181h1M248 183h1M249 185h1M250 187h1M251 189h1M252 191h1M252 193h1M253 195h1M254 197h1M255 199h1M255 201h1M256 203h1M257 205h1M258 207h1M259 209h1M259 211h1M260 213h1M261 215h1M262 217h1M263 219h1M263 221h1M264 223h1M265 225h1M266 227h1M267 229h1M267 231h1M268 233h1M269 235h1M270 237h1M271 239h1M271 241h1M272 243h1M273 245h1M274 247h1M275 249h1M275 251h1M276 253h1M277 255h1M278 257h1M279 259h1M279 261h1M280 263h1M281 265h1M282 267h1M282 269h1M283 271h1M284 273h1M285 275h1M286 277h1M286 279h1M287 281h1M288 283h1M289 285h1M290 287h1M290 289h1M291 291h1M292 293h1M293 295h1M294 297h1M294 299h1M295 301h1M296 303h1M297 305h1M298 307h1M298 309h1M299 311h1M300 313h1M301 315h1M302 317h1M302 319h1M303 321h1M304 323h1M305 325h1M306 327h1M306 329h1M307 331h1M308 333h1M309 335h1M309 337h1M310 339h1M311 341h1M312 343h1M313 345h1M313 347h1M314 349h1M315 351h1M316 353h1M317 355h1M317 357h1M318 359h1M319 361h1M320 363h1M321 365h1M321 367h1M322 369h1M323 371h1M324 373h1M325 375h1M325 377h1M326 379h1M327 381h1M328 383h1M329 385h1M329 387h1M330 389h1M331 391h1M332 393h1M333 395h1M333 397h1M334 399h1M335 401h1M336 403h1M336 405h1M337 407h1M338 409h1M339 411h1M340 413h1M340 415h1M341 417h1M342 419h1M343 421h1M344 423h1M344 425h1M345 427h1M346 429h1M347 431h1M348 433h1"/>
<path stroke="#ffff00" d="M361 428h1M358 429h1M355 431h1M352 432h1M349 434h1"/>
<path stroke="#0000ff" d="M242 168h1M243 170h1M244 172h1M245 174h1M246 176h1M247 178h1M248 180h1M249 182h1M250 184h1M251 186h1M252 188h1M252 190h1M253 192h1M254 194h1M255 196h1M256 198h1M257 200h1M258 202h1M259 204h1M260 206h1M261 208h1M262 210h1M263 212h1M263 214h1M264 216h1M265 218h1M266 220h1M267 222h1M268 224h1M269 226h1M270 228h1M271 230h1M272 232h1M273 234h1M273 236h1M274 238h1M275 240h1M276 242h1M277 244h1M278 246h1M279 248h1M280 250h1M281 252h1M282 254h1M283 256h1M283 258h1M284 260h1M285 262h1M286 264h1M287 266h1M288 268h1M289 270h1M290 272h1M291 274h1M292 276h1M293 278h1M294 280h1M294 282h1M295 284h1M296 286h1M297 288h1M298 290h1M299 292h1M300 294h1M301 296h1M302 298h1M303 300h1M304 302h1M304 304h1M305 306h1M306 308h1M307 310h1M308 312h1M309 314h1M310 316h1M311 318h1M312 320h1M313 322h1M314 324h1M314 326h1M315 328h1M316 330h1M317 332h1M318 334h1M319 336h1M320 338h1M321 340h1M322 342h1M323 344h1M324 346h1M325 348h1M325 350h1M326 352h1M327 354h1M328 356h1M329 358h1M330 360h1M331 362h1M332 364h1M333 366h1M334 368h1M335 370h1M335 372h1M336 374h1M337 376h1M338 378h1M339 380h1M340 382h1M341 384h1M342 386h1M343 388h1M344 390h1M345 392h1M345 394h1M346 396h1M347 398h1M348 400h1M349 402h1M350 404h1M351 406h1M352 408h1M353 410h1M354 412h1M355 414h1M356 416h1M356 418h1M357 420h1M358 422h1M359 424h1M360 426h1M361 428h1"/>
<path stroke="#ff0000" d="M744 106h1M746 106h1M748 106h1M745 107h1M747 107h1M749 107h1M751 107h1M745 108h1M747 108h1M749 108h3M745 109h1M747 109h1M749 109h1M751 109h1M745 110h1M747 110h1M749 110h1M751 110h1M745 111h1M747 111h1M749 111h1M751 111h1M745 112h1M747 112h1M749 112h1M751 112h1M745 113h1M747 113h1M750 113h1M749 114h1M751 114h1"/>
<path stroke="#ffff00" d="M747 118h3M746 119h1M750 119h1M746 120h1M750 120h1M744 121h4M749 121h4M744 123h9"/>
<path stroke="#00ff00" d="M744 126h1M746 126h1M748 126h1M745 127h1M747 127h1M749 127h1M745 128h1M747 128h1M749 128h1M745 129h1M747 129h1M749 129h1M745 130h1M747 130h1M749 130h1M745 131h1M747 131h1M749 131h1M745 132h1M747 132h1M749 132h1M751 132h2M745 133h1M747 133h1M749 133h1M752 133h1M750 134h2"/>
<path stroke="#0000ff" d="M750 136h3M751 137h2M750 138h1M752 138h1M745 139h1M749 139h1M746 140h1M748 140h1M747 141h1M746 142h1M748 142h1M745 143h1M749 143h1M744 144h1"/>
<path stroke="#ff0000" d="M745 146h1M748 146h1M750 146h2M744 147h2M748 147h2M752 147h1M745 148h1M747 148h1M749 148h1M752 148h1M745 149h1M747 149h1M750 149h2M745 150h1M747 150h1M751 150h1M746 151h1M752 151h1M746 152h1M752 152h1M746 153h1M752 153h1M751 154h1"/>
<path stroke="#ffff00" d="M746 156h1M749 156h1M752 156h1M745 157h2M748 157h2M751 157h1M745 158h1M747 158h2M750 158h2M744 159h1M747 159h1M750 159h1M746 161h1M749 161h1M752 161h1M745 162h2M748 162h2M751 162h1M745 163h1M747 163h2M750 163h2M744 164h1M747 164h1M750 164h1"/>
<path stroke="#00ff00" d="M744 166h1M752 166h1M745 167h1M751 167h1M746 168h1M750 168h1M746 169h1M750 169h1M744 170h9M746 171h1M750 171h1M746 172h1M750 172h1M745 173h1M751 173h1M744 174h1M752 174h1"/>
<path stroke="#0000ff" d="M745 176h2M750 176h2M744 177h1M747 177h1M749 177h1M752 177h1M744 178h1M747 178h1M749 178h1M752 178h1M745 179h1M747 179h1M749 179h1M751 179h1M748 180h1M748 181h1M748 182h1M748 183h1M748 184h1"/>
<path stroke="#ff0000" d="M745 186h1M751 186h1M746 187h1M750 187h1M747 188h3M746 189h1M750 189h1M745 190h1M751 190h1M745 191h1M751 191h1M745 192h1M751 192h1M746 193h1M750 193h1M747 194h3"/>
<path stroke="#ffff00" d="M745 196h1M752 196h1M746 197h6M747 198h1M750 198h1M747 199h1M750 199h1M747 200h1M750 200h1M747 201h1M750 201h1M747 202h1M750 202h1M746 203h6M745 204h1M752 204h1"/>
<path stroke="#00ff00" d="M747 207h3M745 208h2M750 208h2M744 209h1M749 209h1M752 209h1M745 210h2M749 210h1M752 210h1M744 211h1M747 211h1M750 211h2M744 212h1M747 212h1M752 212h1M745 213h2M750 213h2M747 214h3"/>
<path stroke="#0000ff" d="M747 216h3M746 217h1M750 217h1M745 218h1M751 218h1M745 219h1M751 219h1M745 220h1M751 220h1M746 221h1M750 221h1M744 222h1M746 222h1M750 222h1M745 223h1M751 223h1M752 224h1"/>
<path stroke="#ff0000" d="M747 236h3M745 237h2M750 237h2M745 238h1M751 238h1M744 239h1M752 239h1M744 240h1M748 240h1M752 240h1M744 241h1M752 241h1M745 242h1M751 242h1M745 243h2M750 243h2M747 244h3"/>
<path stroke="#0000ff" d="M746 246h3M745 247h1M749 247h2M746 248h1M750 248h1M747 249h1M751 249h1M747 250h1M751 250h1M747 251h1M751 251h1M746 252h1M750 252h1M745 253h1M749 253h2M746 254h3"/>
<path stroke="#00ff00" d="M746 256h1M750 256h1M747 257h3M746 258h1M750 258h1M746 259h1M750 259h1M746 260h1M750 260h1M747 261h3M748 262h1M746 263h5M748 264h1M747 266h3M746 267h1M750 267h1M746 268h1M750 268h1M746 269h1M750 269h1M747 270h3M748 271h1M746 272h5M748 273h1M748 274h1"/>
<path stroke="#ff0000" d="M750 276h3M751 277h2M750 278h1M752 278h1M746 279h2M749 279h1M745 280h1M748 280h1M744 281h1M749 281h1M744 282h1M749 282h1M745 283h1M748 283h1M746 284h2M751 286h1M745 287h2M750 287h1M747 288h1M750 288h1M747 289h1M750 289h1M746 290h1M750 290h1M746 291h1M750 291h1M745 292h1M750 292h1M745 293h8M750 294h1"/>
<path stroke="#ffff00" d="M747 296h1M745 297h5M747 298h1M747 299h1M749 299h2M747 300h2M751 300h1M747 301h1M751 301h1M747 302h1M750 302h1M747 303h1M750 303h1M751 304h1"/>
<path stroke="#00ff00" d="M745 306h1M751 306h1M746 307h1M750 307h1M746 308h1M748 308h1M750 308h1M746 309h5M746 310h1M748 310h1M750 310h1M745 311h1M748 311h1M751 311h1M747 312h3M747 313h1M749 313h1M748 314h1"/>
<path stroke="#0000ff" d="M745 316h1M748 316h1M751 316h1M744 317h2M747 317h3M751 317h2M745 318h1M748 318h1M751 318h1M746 319h1M748 319h1M750 319h1M747 320h3M748 321h1M746 322h5M748 323h1M748 324h1M745 326h1M748 326h1M751 326h1M745 327h1M747 327h1M749 327h1M751 327h1M745 328h1M748 328h1M751 328h1M746 329h1M750 329h1M747 330h3M748 331h1M746 332h5M748 333h1M748 334h1"/>
<path stroke="#008080" d="M747 336h3M746 337h1M750 337h1M745 338h1M751 338h1M745 339h1M751 339h1M745 340h1M751 340h1M746 341h1M750 341h1M745 342h2M750 342h2M744 343h1M746 343h1M750 343h1M752 343h1M745 344h1M751 344h1"/>
</g>
<g fill="none" stroke="#c0c0c0" stroke-width="1" shape-rendering="crispEdges">
<path d="M0 0.5H760M0 599.5H760M0.5 0V600M759.5 0V600M599.5 0V600"/>
</g>
<g><text class="hn" transform="translate(95.5,353) scale(0.75,1)" x="0.00" fill="#f00" stroke="#f00" stroke-width="0.2" vector-effect="non-scaling-stroke">1</text><text class="hn" transform="translate(144.5,445) scale(0.75,1)" x="0.00" fill="#ff0" stroke="#ff0" stroke-width="0.2" vector-effect="non-scaling-stroke">2</text><text class="hn" transform="translate(239.5,505) scale(0.75,1)" x="0.00" fill="#0f0" stroke="#0f0" stroke-width="0.2" vector-effect="non-scaling-stroke">3</text><text class="hn" transform="translate(353.5,507) scale(0.75,1)" x="0.00" fill="#00f" stroke="#00f" stroke-width="0.2" vector-effect="non-scaling-stroke">4</text><text class="hn" transform="translate(449.5,450) scale(0.75,1)" x="0.00" fill="#f00" stroke="#f00" stroke-width="0.2" vector-effect="non-scaling-stroke">5</text><text class="hn" transform="translate(502.5,356) scale(0.75,1)" x="0.00" fill="#ff0" stroke="#ff0" stroke-width="0.2" vector-effect="non-scaling-stroke">6</text><text class="hn" transform="translate(503.5,255) scale(0.75,1)" x="0.00" fill="#0f0" stroke="#0f0" stroke-width="0.2" vector-effect="non-scaling-stroke">7</text><text class="hn" transform="translate(454.5,163) scale(0.75,1)" x="0.00" fill="#00f" stroke="#00f" stroke-width="0.2" vector-effect="non-scaling-stroke">8</text><text class="hn" transform="translate(359.5,103) scale(0.75,1)" x="0.00" fill="#f00" stroke="#f00" stroke-width="0.2" vector-effect="non-scaling-stroke">9</text><text class="hn" transform="translate(245.5,101) scale(0.75,1)" x="-5.33 5.33" fill="#ff0" stroke="#ff0" stroke-width="0.2" vector-effect="non-scaling-stroke">10</text><text class="hn" transform="translate(149.5,158) scale(0.75,1)" x="-5.33 5.33" fill="#0f0" stroke="#0f0" stroke-width="0.2" vector-effect="non-scaling-stroke">11</text><text class="hn" transform="translate(96.5,252) scale(0.75,1)" x="-5.33 5.33" fill="#00f" stroke="#00f" stroke-width="0.2" vector-effect="non-scaling-stroke">12</text><text class="lab" transform="translate(0,307.6) scale(0.34,1)" x="333.82 354.41 372.06" font-size="21.6" fill="#f00" stroke="#f00" stroke-width="0.7" vector-effect="non-scaling-stroke">Asc</text><text class="lab" transform="translate(0,127.6) scale(0.56,1)" x="531.25 547.50" font-size="21.6" fill="#ff0" stroke="#ff0" stroke-width="0.7" vector-effect="non-scaling-stroke">MC</text></g>
</svg>
<div class="ln" style="top:7px"><span class="w">Astrolog 5.40</span></div><div class="ln" style="top:17px"><span class="g">"Anonymous"</span></div><div class="ln" style="top:27px"><span class="g">Sun December 21, 1980</span></div><div class="ln" style="top:37px"><span class="g">10:00pm (ST +8:00 GMT)</span></div><div class="ln" style="top:47px"><span class="g">"Taiwan"</span></div><div class="ln" style="top:57px"><span class="g">121°00E 25°00N</span></div><div class="ln" style="top:67px"><span class="g">Placidus houses.</span></div><div class="ln" style="top:77px"><span class="g">Tropical, Geocentric.</span></div><div class="ln" style="top:87px"><span class="g">Julian Day = 2444595.0833</span></div><div class="ln" style="top:107px"><span class="r"> 1st house: </span><span class="y"> 4Vir07</span></div><div class="ln" style="top:117px"><span class="y"> 2nd house: </span><span class="n"> 1Lib15</span></div><div class="ln" style="top:127px"><span class="n"> 3rd house: </span><span class="b"> 1Sco33</span></div><div class="ln" style="top:137px"><span class="b"> 4th house: </span><span class="r"> 3Sag19</span></div><div class="ln" style="top:147px"><span class="r"> 5th house: </span><span class="y"> 4Cap45</span></div><div class="ln" style="top:157px"><span class="y"> 6th house: </span><span class="n"> 5Aqu06</span></div><div class="ln" style="top:167px"><span class="n"> 7th house: </span><span class="b"> 4Pis07</span></div><div class="ln" style="top:177px"><span class="b"> 8th house: </span><span class="r"> 1Ari15</span></div><div class="ln" style="top:187px"><span class="r"> 9th house: </span><span class="y"> 1Tau33</span></div><div class="ln" style="top:197px"><span class="y">10th house: </span><span class="n"> 3Gem19</span></div><div class="ln" style="top:207px"><span class="n">11th house: </span><span class="b"> 4Can45</span></div><div class="ln" style="top:217px"><span class="b">12th house: </span><span class="r"> 5Leo06</span></div><div class="ln" style="top:237px"><span class="r"> Sun: </span><span class="r">29Sag53</span><span class="w"> </span><span class="g"> - 0°00'</span></div><div class="ln" style="top:247px"><span class="b">Moon: </span><span class="n">27Gem34</span><span class="w"> </span><span class="g"> - 3°34'</span></div><div class="ln" style="top:257px"><span class="n">Merc: </span><span class="r">24Sag19</span><span class="w"> </span><span class="g"> - 0°57'</span></div><div class="ln" style="top:267px"><span class="n">Venu: </span><span class="r"> 4Sag08</span><span class="w"> </span><span class="g"> + 1°15'</span></div><div class="ln" style="top:277px"><span class="r">Mars: </span><span class="y">22Cap42</span><span class="w"> </span><span class="g"> - 1°08'</span></div><div class="ln" style="top:287px"><span class="r">Jupi: </span><span class="n"> 8Lib36</span><span class="w"> </span><span class="g"> + 1°16'</span></div><div class="ln" style="top:297px"><span class="y">Satu: </span><span class="n"> 9Lib05</span><span class="w"> </span><span class="g"> + 2°19'</span></div><div class="ln" style="top:307px"><span class="n">Uran: </span><span class="b">27Sco52</span><span class="w"> </span><span class="g"> + 0°13'</span></div><div class="ln" style="top:317px"><span class="b">Nept: </span><span class="r">22Sag40</span><span class="w"> </span><span class="g"> + 1°18'</span></div><div class="ln" style="top:327px"><span class="b">Plut: </span><span class="n">23Lib58</span><span class="w"> </span><span class="g"> +16°55'</span></div><div class="ln" style="top:337px"><span class="t">Node: </span><span class="r">13Leo04</span><span class="w">R</span><span class="g"> + 0°00'</span></div><div class="ln" style="top:357px"><span class="g">Fire: 5, Earth: 2,</span></div><div class="ln" style="top:367px"><span class="g">Air : 5, Water: 1</span></div><div class="ln" style="top:377px"><span class="g">Car: 4, Fix: 2, Mut: 7</span></div><div class="ln" style="top:387px"><span class="g">Yang: 10, Yin: 3</span></div><div class="ln" style="top:397px"><span class="g">M: 2, N: 9, A: 6, D: 5</span></div><div class="ln" style="top:407px"><span class="g">Ang: 5, Suc: 4, Cad: 2</span></div><div class="ln" style="top:417px"><span class="g">Learn: 4, Share: 9</span></div>
</div>
</body></html>
